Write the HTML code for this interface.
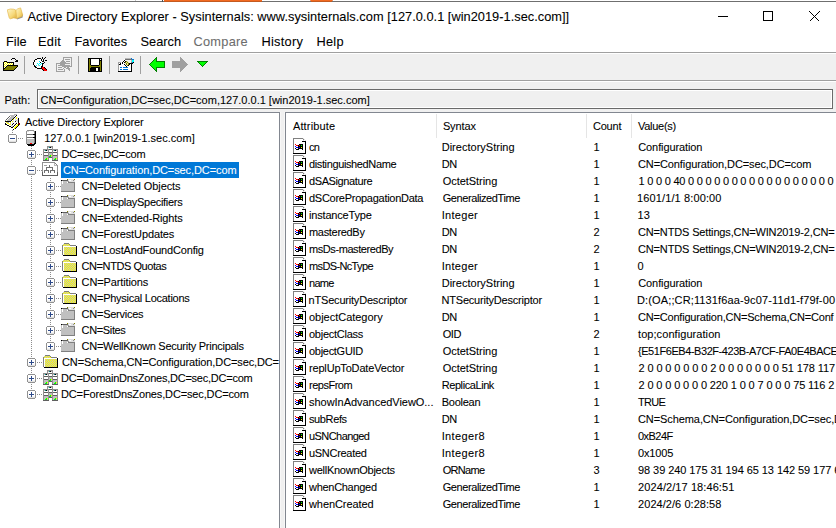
<!DOCTYPE html><html><head><meta charset="utf-8"><title>Active Directory Explorer</title><style>
*{margin:0;padding:0}
html,body{width:836px;height:528px;overflow:hidden;background:#fff}
body{position:relative;font-family:"Liberation Sans",sans-serif;color:#000}
.a{position:absolute;display:block;shape-rendering:crispEdges}
.t{position:absolute;white-space:pre;height:0;width:0;line-height:1}
.t i{font-style:normal;position:absolute;left:0;bottom:0;white-space:pre;-webkit-text-stroke:0.08px currentColor}
</style></head><body>
<div class="a" style="left:0px;top:1px;width:836px;height:1px;background:#6f6f6f;"></div>
<div class="a" style="left:164px;top:0px;width:98px;height:1px;background:#f26a21;"></div>
<div class="a" style="left:164px;top:1px;width:98px;height:1px;background:#c45a20;"></div>
<div class="a" style="left:135px;top:0px;width:1px;height:1px;background:#c8c8c8;"></div>
<div class="a" style="left:162px;top:0px;width:1px;height:2px;background:#505050;"></div>
<div class="a" style="left:310px;top:0px;width:23px;height:1px;background:#f26a21;border-radius:1px 1px 0 0"></div>
<div class="a" style="left:311px;top:1px;width:21px;height:1px;background:#c45a20;"></div>
<svg class="a" style="left:7px;top:7px;shape-rendering:geometricPrecision" width="17" height="14" viewBox="0 0 17 14">
<defs><linearGradient id="bk" x1="0" y1="0" x2="1" y2="1"><stop offset="0" stop-color="#fff6c8"/><stop offset="0.6" stop-color="#f6d878"/><stop offset="1" stop-color="#d9a93a"/></linearGradient></defs>
<path d="M15.8 7.2 L15.6 10.4 L10 12.6 L9.6 11.6 Z" fill="#6e6e6e" opacity="0.75"/>
<path d="M0.2 2.9 Q3.5 1.4 6.6 2.2 Q8.4 2.6 9.2 3.6 L9.7 11.4 Q6.4 10.2 3.6 11.8 Q2.6 11.9 2.2 10.8 Z" fill="url(#bk)" stroke="#e0b040" stroke-width="0.6"/>
<path d="M8.9 3.4 Q10.2 1.4 13.6 0.9 L15.6 7.6 Q15.7 9.2 14.6 9.8 Q11.8 10.3 9.7 11.4 Z" fill="url(#bk)" stroke="#e0b040" stroke-width="0.6"/>
</svg>
<span class="t" style="left:27.5px;top:24px;font-size:12.8px;color:#000;letter-spacing:0.020px"><i>Active Directory Explorer - Sysinternals: www.sysinternals.com [127.0.0.1 [win2019-1.sec.com]]</i></span>
<div class="a" style="left:718px;top:16px;width:10px;height:1px;background:#000;"></div>
<div class="a" style="left:763px;top:11px;width:8px;height:8px;border:1px solid #000"></div>
<svg class="a" style="left:809px;top:11px" width="11" height="11" viewBox="0 0 11 11"><path d="M0.5 0.5L10.5 10.5M10.5 0.5L0.5 10.5" stroke="#000" stroke-width="1.1"/></svg>
<span class="t" style="left:6px;top:49px;font-size:12.8px;color:#000;letter-spacing:0.000px"><i>File</i></span>
<span class="t" style="left:38px;top:49px;font-size:12.8px;color:#000;letter-spacing:0.250px"><i>Edit</i></span>
<span class="t" style="left:74.5px;top:49px;font-size:12.8px;color:#000;letter-spacing:0.000px"><i>Favorites</i></span>
<span class="t" style="left:140.5px;top:49px;font-size:12.8px;color:#000;letter-spacing:0.000px"><i>Search</i></span>
<span class="t" style="left:193.5px;top:49px;font-size:12.8px;color:#6d6d6d;letter-spacing:0.250px"><i>Compare</i></span>
<span class="t" style="left:261.5px;top:49px;font-size:12.8px;color:#000;letter-spacing:0.250px"><i>History</i></span>
<span class="t" style="left:316.5px;top:49px;font-size:12.8px;color:#000;letter-spacing:0.250px"><i>Help</i></span>
<div class="a" style="left:0px;top:52px;width:836px;height:1px;background:#a0a0a0;"></div>
<div class="a" style="left:0px;top:53px;width:836px;height:1px;background:#fff;"></div>
<div class="a" style="left:0px;top:54px;width:836px;height:26px;background:#f0f0f0;"></div>
<div class="a" style="left:0px;top:80px;width:836px;height:1px;background:#a0a0a0;"></div>
<div class="a" style="left:0px;top:81px;width:836px;height:1px;background:#fff;"></div>
<div class="a" style="left:0px;top:82px;width:836px;height:30px;background:#f0f0f0;"></div>
<div class="a" style="left:24px;top:56px;width:1px;height:18px;background:#a0a0a0;"></div>
<div class="a" style="left:78px;top:56px;width:1px;height:18px;background:#a0a0a0;"></div>
<div class="a" style="left:109px;top:56px;width:1px;height:18px;background:#a0a0a0;"></div>
<div class="a" style="left:140px;top:56px;width:1px;height:18px;background:#a0a0a0;"></div>
<svg class="a" style="left:2px;top:55px" width="16" height="16" shape-rendering="crispEdges"><rect x="10" y="3" width="3" height="1" fill="#000000"/><rect x="9" y="4" width="1" height="1" fill="#000000"/><rect x="13" y="4" width="1" height="1" fill="#000000"/><rect x="14" y="5" width="2" height="1" fill="#000000"/><rect x="2" y="6" width="3" height="1" fill="#000000"/><rect x="13" y="6" width="3" height="1" fill="#000000"/><rect x="1" y="7" width="1" height="1" fill="#000000"/><rect x="2" y="7" width="1" height="1" fill="#ffff00"/><rect x="3" y="7" width="1" height="1" fill="#ffffff"/><rect x="4" y="7" width="1" height="1" fill="#ffff00"/><rect x="5" y="7" width="7" height="1" fill="#000000"/><rect x="1" y="8" width="1" height="1" fill="#000000"/><rect x="2" y="8" width="1" height="1" fill="#ffffff"/><rect x="3" y="8" width="1" height="1" fill="#ffff00"/><rect x="4" y="8" width="1" height="1" fill="#ffffff"/><rect x="5" y="8" width="1" height="1" fill="#ffff00"/><rect x="6" y="8" width="1" height="1" fill="#ffffff"/><rect x="7" y="8" width="1" height="1" fill="#ffff00"/><rect x="8" y="8" width="1" height="1" fill="#ffffff"/><rect x="9" y="8" width="1" height="1" fill="#ffff00"/><rect x="10" y="8" width="1" height="1" fill="#ffffff"/><rect x="11" y="8" width="1" height="1" fill="#000000"/><rect x="1" y="9" width="1" height="1" fill="#000000"/><rect x="2" y="9" width="1" height="1" fill="#ffff00"/><rect x="3" y="9" width="1" height="1" fill="#ffffff"/><rect x="4" y="9" width="1" height="1" fill="#ffff00"/><rect x="5" y="9" width="1" height="1" fill="#ffffff"/><rect x="6" y="9" width="1" height="1" fill="#ffff00"/><rect x="7" y="9" width="1" height="1" fill="#ffffff"/><rect x="8" y="9" width="1" height="1" fill="#ffff00"/><rect x="9" y="9" width="1" height="1" fill="#ffffff"/><rect x="10" y="9" width="1" height="1" fill="#ffff00"/><rect x="11" y="9" width="1" height="1" fill="#000000"/><rect x="1" y="10" width="1" height="1" fill="#000000"/><rect x="2" y="10" width="1" height="1" fill="#ffffff"/><rect x="3" y="10" width="1" height="1" fill="#ffff00"/><rect x="4" y="10" width="1" height="1" fill="#ffffff"/><rect x="5" y="10" width="11" height="1" fill="#000000"/><rect x="1" y="11" width="1" height="1" fill="#000000"/><rect x="2" y="11" width="1" height="1" fill="#ffff00"/><rect x="3" y="11" width="1" height="1" fill="#ffffff"/><rect x="4" y="11" width="1" height="1" fill="#000000"/><rect x="5" y="11" width="10" height="1" fill="#808000"/><rect x="15" y="11" width="1" height="1" fill="#000000"/><rect x="1" y="12" width="1" height="1" fill="#000000"/><rect x="2" y="12" width="1" height="1" fill="#ffffff"/><rect x="3" y="12" width="1" height="1" fill="#000000"/><rect x="4" y="12" width="10" height="1" fill="#808000"/><rect x="14" y="12" width="1" height="1" fill="#000000"/><rect x="1" y="13" width="2" height="1" fill="#000000"/><rect x="3" y="13" width="10" height="1" fill="#808000"/><rect x="13" y="13" width="1" height="1" fill="#000000"/><rect x="1" y="14" width="1" height="1" fill="#000000"/><rect x="2" y="14" width="10" height="1" fill="#808000"/><rect x="12" y="14" width="1" height="1" fill="#000000"/><rect x="1" y="15" width="11" height="1" fill="#000000"/></svg>
<svg class="a" style="left:31px;top:55px" width="16" height="16" shape-rendering="crispEdges"><rect x="11" y="2" width="1" height="1" fill="#000000"/><rect x="14" y="2" width="1" height="1" fill="#000000"/><rect x="6" y="3" width="4" height="1" fill="#000000"/><rect x="11" y="3" width="1" height="1" fill="#000000"/><rect x="13" y="3" width="1" height="1" fill="#000000"/><rect x="4" y="4" width="2" height="1" fill="#000000"/><rect x="6" y="4" width="4" height="1" fill="#ffffff"/><rect x="10" y="4" width="1" height="1" fill="#000000"/><rect x="11" y="4" width="1" height="1" fill="#ffffff"/><rect x="12" y="4" width="1" height="1" fill="#000000"/><rect x="3" y="5" width="1" height="1" fill="#000000"/><rect x="4" y="5" width="6" height="1" fill="#ffffff"/><rect x="10" y="5" width="1" height="1" fill="#000000"/><rect x="11" y="5" width="1" height="1" fill="#ffffff"/><rect x="12" y="5" width="1" height="1" fill="#000000"/><rect x="14" y="5" width="2" height="1" fill="#000000"/><rect x="3" y="6" width="1" height="1" fill="#000000"/><rect x="4" y="6" width="4" height="1" fill="#ffffff"/><rect x="8" y="6" width="1" height="1" fill="#00ffff"/><rect x="9" y="6" width="2" height="1" fill="#ffffff"/><rect x="11" y="6" width="2" height="1" fill="#000000"/><rect x="2" y="7" width="1" height="1" fill="#000000"/><rect x="3" y="7" width="6" height="1" fill="#ffffff"/><rect x="9" y="7" width="1" height="1" fill="#000000"/><rect x="10" y="7" width="3" height="1" fill="#ffffff"/><rect x="13" y="7" width="1" height="1" fill="#000000"/><rect x="2" y="8" width="1" height="1" fill="#000000"/><rect x="3" y="8" width="3" height="1" fill="#ffffff"/><rect x="6" y="8" width="1" height="1" fill="#00ffff"/><rect x="7" y="8" width="1" height="1" fill="#ffffff"/><rect x="8" y="8" width="1" height="1" fill="#00ffff"/><rect x="9" y="8" width="1" height="1" fill="#ffffff"/><rect x="10" y="8" width="1" height="1" fill="#00ffff"/><rect x="11" y="8" width="2" height="1" fill="#000000"/><rect x="2" y="9" width="1" height="1" fill="#000000"/><rect x="3" y="9" width="4" height="1" fill="#ffffff"/><rect x="7" y="9" width="1" height="1" fill="#00ffff"/><rect x="8" y="9" width="1" height="1" fill="#ffffff"/><rect x="9" y="9" width="1" height="1" fill="#00ffff"/><rect x="10" y="9" width="1" height="1" fill="#ffffff"/><rect x="11" y="9" width="1" height="1" fill="#000000"/><rect x="3" y="10" width="1" height="1" fill="#000000"/><rect x="4" y="10" width="1" height="1" fill="#ffffff"/><rect x="5" y="10" width="1" height="1" fill="#00ffff"/><rect x="6" y="10" width="1" height="1" fill="#ffffff"/><rect x="7" y="10" width="1" height="1" fill="#f0b0b0"/><rect x="8" y="10" width="1" height="1" fill="#00ffff"/><rect x="9" y="10" width="2" height="1" fill="#ffffff"/><rect x="11" y="10" width="1" height="1" fill="#000000"/><rect x="3" y="11" width="2" height="1" fill="#000000"/><rect x="5" y="11" width="5" height="1" fill="#ffffff"/><rect x="10" y="11" width="2" height="1" fill="#000000"/><rect x="4" y="12" width="2" height="1" fill="#000000"/><rect x="6" y="12" width="4" height="1" fill="#ffffff"/><rect x="10" y="12" width="1" height="1" fill="#000000"/><rect x="11" y="12" width="2" height="1" fill="#ff0000"/><rect x="13" y="12" width="1" height="1" fill="#000000"/><rect x="6" y="13" width="5" height="1" fill="#000000"/><rect x="11" y="13" width="3" height="1" fill="#ff0000"/><rect x="14" y="13" width="1" height="1" fill="#000000"/><rect x="11" y="14" width="1" height="1" fill="#000000"/><rect x="12" y="14" width="3" height="1" fill="#ff0000"/><rect x="15" y="14" width="1" height="1" fill="#000000"/><rect x="12" y="15" width="1" height="1" fill="#000000"/><rect x="13" y="15" width="3" height="1" fill="#ff0000"/></svg>
<svg class="a" style="left:55px;top:56px" width="18" height="16" shape-rendering="crispEdges"><rect x="8" y="1" width="9" height="1" fill="#a0a0a0"/><rect x="8" y="2" width="1" height="1" fill="#a0a0a0"/><rect x="16" y="2" width="1" height="1" fill="#a0a0a0"/><rect x="8" y="3" width="1" height="1" fill="#a0a0a0"/><rect x="10" y="3" width="5" height="1" fill="#a0a0a0"/><rect x="16" y="3" width="1" height="1" fill="#a0a0a0"/><rect x="7" y="4" width="2" height="1" fill="#a0a0a0"/><rect x="16" y="4" width="1" height="1" fill="#a0a0a0"/><rect x="6" y="5" width="4" height="1" fill="#a0a0a0"/><rect x="11" y="5" width="4" height="1" fill="#a0a0a0"/><rect x="16" y="5" width="1" height="1" fill="#a0a0a0"/><rect x="5" y="6" width="6" height="1" fill="#a0a0a0"/><rect x="16" y="6" width="1" height="1" fill="#a0a0a0"/><rect x="1" y="7" width="14" height="1" fill="#a0a0a0"/><rect x="16" y="7" width="1" height="1" fill="#a0a0a0"/><rect x="1" y="8" width="1" height="1" fill="#a0a0a0"/><rect x="5" y="8" width="5" height="1" fill="#a0a0a0"/><rect x="16" y="8" width="1" height="1" fill="#a0a0a0"/><rect x="1" y="9" width="1" height="1" fill="#a0a0a0"/><rect x="3" y="9" width="12" height="1" fill="#a0a0a0"/><rect x="16" y="9" width="1" height="1" fill="#a0a0a0"/><rect x="1" y="10" width="1" height="1" fill="#a0a0a0"/><rect x="7" y="10" width="10" height="1" fill="#a0a0a0"/><rect x="1" y="11" width="1" height="1" fill="#a0a0a0"/><rect x="3" y="11" width="4" height="1" fill="#a0a0a0"/><rect x="9" y="11" width="2" height="1" fill="#a0a0a0"/><rect x="12" y="11" width="2" height="1" fill="#a0a0a0"/><rect x="1" y="12" width="1" height="1" fill="#a0a0a0"/><rect x="8" y="12" width="1" height="1" fill="#a0a0a0"/><rect x="11" y="12" width="4" height="1" fill="#a0a0a0"/><rect x="1" y="13" width="1" height="1" fill="#a0a0a0"/><rect x="3" y="13" width="5" height="1" fill="#a0a0a0"/><rect x="9" y="13" width="1" height="1" fill="#a0a0a0"/><rect x="13" y="13" width="2" height="1" fill="#a0a0a0"/><rect x="1" y="14" width="1" height="1" fill="#a0a0a0"/><rect x="9" y="14" width="1" height="1" fill="#a0a0a0"/><rect x="14" y="14" width="1" height="1" fill="#a0a0a0"/><rect x="1" y="15" width="9" height="1" fill="#a0a0a0"/></svg>
<svg class="a" style="left:88px;top:58px" width="14" height="14" shape-rendering="crispEdges"><rect x="0" y="0" width="14" height="1" fill="#000000"/><rect x="0" y="1" width="1" height="1" fill="#000000"/><rect x="1" y="1" width="1" height="1" fill="#808000"/><rect x="2" y="1" width="1" height="1" fill="#000000"/><rect x="3" y="1" width="8" height="1" fill="#ffffff"/><rect x="11" y="1" width="1" height="1" fill="#000000"/><rect x="12" y="1" width="1" height="1" fill="#ffffff"/><rect x="13" y="1" width="1" height="1" fill="#000000"/><rect x="0" y="2" width="1" height="1" fill="#000000"/><rect x="1" y="2" width="1" height="1" fill="#808000"/><rect x="2" y="2" width="1" height="1" fill="#000000"/><rect x="3" y="2" width="8" height="1" fill="#ffffff"/><rect x="11" y="2" width="3" height="1" fill="#000000"/><rect x="0" y="3" width="1" height="1" fill="#000000"/><rect x="1" y="3" width="1" height="1" fill="#808000"/><rect x="2" y="3" width="1" height="1" fill="#000000"/><rect x="3" y="3" width="8" height="1" fill="#ffffff"/><rect x="11" y="3" width="1" height="1" fill="#000000"/><rect x="12" y="3" width="1" height="1" fill="#808000"/><rect x="13" y="3" width="1" height="1" fill="#000000"/><rect x="0" y="4" width="1" height="1" fill="#000000"/><rect x="1" y="4" width="1" height="1" fill="#808000"/><rect x="2" y="4" width="1" height="1" fill="#000000"/><rect x="3" y="4" width="8" height="1" fill="#ffffff"/><rect x="11" y="4" width="1" height="1" fill="#000000"/><rect x="12" y="4" width="1" height="1" fill="#808000"/><rect x="13" y="4" width="1" height="1" fill="#000000"/><rect x="0" y="5" width="1" height="1" fill="#000000"/><rect x="1" y="5" width="1" height="1" fill="#808000"/><rect x="2" y="5" width="1" height="1" fill="#000000"/><rect x="3" y="5" width="8" height="1" fill="#ffffff"/><rect x="11" y="5" width="1" height="1" fill="#000000"/><rect x="12" y="5" width="1" height="1" fill="#808000"/><rect x="13" y="5" width="1" height="1" fill="#000000"/><rect x="0" y="6" width="1" height="1" fill="#000000"/><rect x="1" y="6" width="1" height="1" fill="#808000"/><rect x="2" y="6" width="1" height="1" fill="#000000"/><rect x="3" y="6" width="8" height="1" fill="#ffffff"/><rect x="11" y="6" width="1" height="1" fill="#000000"/><rect x="12" y="6" width="1" height="1" fill="#808000"/><rect x="13" y="6" width="1" height="1" fill="#000000"/><rect x="0" y="7" width="1" height="1" fill="#000000"/><rect x="1" y="7" width="2" height="1" fill="#808000"/><rect x="3" y="7" width="8" height="1" fill="#000000"/><rect x="11" y="7" width="2" height="1" fill="#808000"/><rect x="13" y="7" width="1" height="1" fill="#000000"/><rect x="0" y="8" width="1" height="1" fill="#000000"/><rect x="1" y="8" width="12" height="1" fill="#808000"/><rect x="13" y="8" width="1" height="1" fill="#000000"/><rect x="0" y="9" width="1" height="1" fill="#000000"/><rect x="1" y="9" width="2" height="1" fill="#808000"/><rect x="3" y="9" width="9" height="1" fill="#000000"/><rect x="12" y="9" width="1" height="1" fill="#808000"/><rect x="13" y="9" width="1" height="1" fill="#000000"/><rect x="0" y="10" width="1" height="1" fill="#000000"/><rect x="1" y="10" width="1" height="1" fill="#808000"/><rect x="2" y="10" width="6" height="1" fill="#000000"/><rect x="8" y="10" width="2" height="1" fill="#ffffff"/><rect x="10" y="10" width="2" height="1" fill="#000000"/><rect x="12" y="10" width="1" height="1" fill="#808000"/><rect x="13" y="10" width="1" height="1" fill="#000000"/><rect x="0" y="11" width="1" height="1" fill="#000000"/><rect x="1" y="11" width="1" height="1" fill="#808000"/><rect x="2" y="11" width="6" height="1" fill="#000000"/><rect x="8" y="11" width="2" height="1" fill="#ffffff"/><rect x="10" y="11" width="2" height="1" fill="#000000"/><rect x="12" y="11" width="1" height="1" fill="#808000"/><rect x="13" y="11" width="1" height="1" fill="#000000"/><rect x="0" y="12" width="1" height="1" fill="#000000"/><rect x="1" y="12" width="1" height="1" fill="#808000"/><rect x="2" y="12" width="6" height="1" fill="#000000"/><rect x="8" y="12" width="2" height="1" fill="#ffffff"/><rect x="10" y="12" width="2" height="1" fill="#000000"/><rect x="12" y="12" width="1" height="1" fill="#808000"/><rect x="13" y="12" width="1" height="1" fill="#000000"/><rect x="0" y="13" width="14" height="1" fill="#000000"/></svg>
<svg class="a" style="left:117px;top:56px" width="18" height="16" shape-rendering="crispEdges"><rect x="8" y="2" width="6" height="1" fill="#b8b8b8"/><rect x="14" y="2" width="1" height="1" fill="#0078d7"/><rect x="7" y="3" width="1" height="1" fill="#ffffff"/><rect x="8" y="3" width="7" height="1" fill="#707070"/><rect x="15" y="3" width="2" height="1" fill="#0078d7"/><rect x="6" y="4" width="1" height="1" fill="#ffffff"/><rect x="7" y="4" width="1" height="1" fill="#000000"/><rect x="8" y="4" width="1" height="1" fill="#ffffff"/><rect x="12" y="4" width="2" height="1" fill="#f4f4f4"/><rect x="14" y="4" width="1" height="1" fill="#b8b8b8"/><rect x="15" y="4" width="2" height="1" fill="#00ffff"/><rect x="5" y="5" width="1" height="1" fill="#ffffff"/><rect x="6" y="5" width="1" height="1" fill="#000000"/><rect x="7" y="5" width="1" height="1" fill="#ffffff"/><rect x="8" y="5" width="1" height="1" fill="#000000"/><rect x="9" y="5" width="1" height="1" fill="#808000"/><rect x="10" y="5" width="1" height="1" fill="#e8e8a0"/><rect x="12" y="5" width="2" height="1" fill="#f4f4f4"/><rect x="14" y="5" width="1" height="1" fill="#b8b8b8"/><rect x="15" y="5" width="2" height="1" fill="#00ffff"/><rect x="1" y="6" width="3" height="1" fill="#a0a0a0"/><rect x="4" y="6" width="1" height="1" fill="#ffffff"/><rect x="5" y="6" width="1" height="1" fill="#000000"/><rect x="6" y="6" width="1" height="1" fill="#ffffff"/><rect x="7" y="6" width="1" height="1" fill="#000000"/><rect x="8" y="6" width="1" height="1" fill="#808000"/><rect x="9" y="6" width="1" height="1" fill="#e8e8a0"/><rect x="10" y="6" width="1" height="1" fill="#808000"/><rect x="11" y="6" width="1" height="1" fill="#e8e8a0"/><rect x="12" y="6" width="2" height="1" fill="#f4f4f4"/><rect x="14" y="6" width="1" height="1" fill="#808080"/><rect x="15" y="6" width="1" height="1" fill="#0078d7"/><rect x="16" y="6" width="1" height="1" fill="#000000"/><rect x="1" y="7" width="1" height="1" fill="#a0a0a0"/><rect x="2" y="7" width="1" height="1" fill="#ffffff"/><rect x="3" y="7" width="1" height="1" fill="#000000"/><rect x="4" y="7" width="1" height="1" fill="#ffffff"/><rect x="5" y="7" width="1" height="1" fill="#000000"/><rect x="6" y="7" width="1" height="1" fill="#ffffff"/><rect x="8" y="7" width="1" height="1" fill="#e8e8a0"/><rect x="9" y="7" width="1" height="1" fill="#808000"/><rect x="10" y="7" width="1" height="1" fill="#e8e8a0"/><rect x="11" y="7" width="1" height="1" fill="#808000"/><rect x="12" y="7" width="4" height="1" fill="#000000"/><rect x="1" y="8" width="1" height="1" fill="#a0a0a0"/><rect x="2" y="8" width="2" height="1" fill="#000000"/><rect x="4" y="8" width="3" height="1" fill="#ffffff"/><rect x="7" y="8" width="1" height="1" fill="#000000"/><rect x="9" y="8" width="1" height="1" fill="#808000"/><rect x="10" y="8" width="1" height="1" fill="#e8e8a0"/><rect x="11" y="8" width="1" height="1" fill="#808000"/><rect x="12" y="8" width="1" height="1" fill="#000000"/><rect x="13" y="8" width="1" height="1" fill="#ffffff"/><rect x="14" y="8" width="1" height="1" fill="#000000"/><rect x="1" y="9" width="1" height="1" fill="#a0a0a0"/><rect x="2" y="9" width="6" height="1" fill="#ffffff"/><rect x="8" y="9" width="1" height="1" fill="#000000"/><rect x="10" y="9" width="1" height="1" fill="#808000"/><rect x="11" y="9" width="1" height="1" fill="#000000"/><rect x="12" y="9" width="2" height="1" fill="#ffffff"/><rect x="14" y="9" width="1" height="1" fill="#000000"/><rect x="1" y="10" width="1" height="1" fill="#a0a0a0"/><rect x="2" y="10" width="7" height="1" fill="#ffffff"/><rect x="9" y="10" width="1" height="1" fill="#000000"/><rect x="10" y="10" width="4" height="1" fill="#ffffff"/><rect x="14" y="10" width="1" height="1" fill="#000000"/><rect x="1" y="11" width="1" height="1" fill="#a0a0a0"/><rect x="2" y="11" width="1" height="1" fill="#ffffff"/><rect x="3" y="11" width="2" height="1" fill="#0078d7"/><rect x="5" y="11" width="1" height="1" fill="#ffffff"/><rect x="6" y="11" width="5" height="1" fill="#0078d7"/><rect x="11" y="11" width="3" height="1" fill="#ffffff"/><rect x="14" y="11" width="1" height="1" fill="#000000"/><rect x="1" y="12" width="1" height="1" fill="#a0a0a0"/><rect x="2" y="12" width="12" height="1" fill="#ffffff"/><rect x="14" y="12" width="1" height="1" fill="#000000"/><rect x="1" y="13" width="1" height="1" fill="#a0a0a0"/><rect x="2" y="13" width="1" height="1" fill="#ffffff"/><rect x="3" y="13" width="2" height="1" fill="#0078d7"/><rect x="5" y="13" width="1" height="1" fill="#ffffff"/><rect x="6" y="13" width="5" height="1" fill="#0078d7"/><rect x="11" y="13" width="3" height="1" fill="#ffffff"/><rect x="14" y="13" width="1" height="1" fill="#000000"/><rect x="1" y="14" width="1" height="1" fill="#a0a0a0"/><rect x="2" y="14" width="12" height="1" fill="#ffffff"/><rect x="14" y="14" width="1" height="1" fill="#000000"/><rect x="1" y="15" width="14" height="1" fill="#000000"/></svg>
<svg class="a" style="left:148px;top:57px" width="18" height="15" shape-rendering="crispEdges"><rect x="8" y="0" width="1" height="1" fill="#008000"/><rect x="7" y="1" width="2" height="1" fill="#008000"/><rect x="6" y="2" width="1" height="1" fill="#008000"/><rect x="7" y="2" width="1" height="1" fill="#00ff00"/><rect x="8" y="2" width="1" height="1" fill="#008000"/><rect x="5" y="3" width="1" height="1" fill="#008000"/><rect x="6" y="3" width="2" height="1" fill="#00ff00"/><rect x="8" y="3" width="1" height="1" fill="#008000"/><rect x="4" y="4" width="1" height="1" fill="#008000"/><rect x="5" y="4" width="3" height="1" fill="#00ff00"/><rect x="8" y="4" width="9" height="1" fill="#008000"/><rect x="3" y="5" width="1" height="1" fill="#008000"/><rect x="4" y="5" width="12" height="1" fill="#00ff00"/><rect x="16" y="5" width="1" height="1" fill="#008000"/><rect x="2" y="6" width="1" height="1" fill="#008000"/><rect x="3" y="6" width="13" height="1" fill="#00ff00"/><rect x="16" y="6" width="1" height="1" fill="#008000"/><rect x="1" y="7" width="1" height="1" fill="#008000"/><rect x="2" y="7" width="14" height="1" fill="#00ff00"/><rect x="16" y="7" width="1" height="1" fill="#008000"/><rect x="2" y="8" width="1" height="1" fill="#008000"/><rect x="3" y="8" width="13" height="1" fill="#00ff00"/><rect x="16" y="8" width="1" height="1" fill="#008000"/><rect x="3" y="9" width="1" height="1" fill="#008000"/><rect x="4" y="9" width="12" height="1" fill="#00ff00"/><rect x="16" y="9" width="1" height="1" fill="#008000"/><rect x="4" y="10" width="1" height="1" fill="#008000"/><rect x="5" y="10" width="3" height="1" fill="#00ff00"/><rect x="8" y="10" width="9" height="1" fill="#008000"/><rect x="5" y="11" width="1" height="1" fill="#008000"/><rect x="6" y="11" width="2" height="1" fill="#00ff00"/><rect x="8" y="11" width="1" height="1" fill="#008000"/><rect x="6" y="12" width="1" height="1" fill="#008000"/><rect x="7" y="12" width="1" height="1" fill="#00ff00"/><rect x="8" y="12" width="1" height="1" fill="#008000"/><rect x="7" y="13" width="2" height="1" fill="#008000"/><rect x="8" y="14" width="1" height="1" fill="#008000"/></svg>
<svg class="a" style="left:171px;top:57px" width="18" height="15" shape-rendering="crispEdges"><rect x="9" y="0" width="1" height="1" fill="#a0a0a0"/><rect x="9" y="1" width="2" height="1" fill="#a0a0a0"/><rect x="9" y="2" width="3" height="1" fill="#a0a0a0"/><rect x="9" y="3" width="4" height="1" fill="#a0a0a0"/><rect x="1" y="4" width="13" height="1" fill="#a0a0a0"/><rect x="1" y="5" width="14" height="1" fill="#a0a0a0"/><rect x="1" y="6" width="15" height="1" fill="#a0a0a0"/><rect x="1" y="7" width="16" height="1" fill="#a0a0a0"/><rect x="1" y="8" width="15" height="1" fill="#a0a0a0"/><rect x="1" y="9" width="14" height="1" fill="#a0a0a0"/><rect x="1" y="10" width="13" height="1" fill="#a0a0a0"/><rect x="9" y="11" width="4" height="1" fill="#a0a0a0"/><rect x="9" y="12" width="3" height="1" fill="#a0a0a0"/><rect x="9" y="13" width="2" height="1" fill="#a0a0a0"/><rect x="9" y="14" width="1" height="1" fill="#a0a0a0"/></svg>
<svg class="a" style="left:197px;top:61px" width="11" height="6" shape-rendering="crispEdges"><rect x="0" y="0" width="11" height="1" fill="#008000"/><rect x="1" y="1" width="1" height="1" fill="#008000"/><rect x="2" y="1" width="7" height="1" fill="#00ff00"/><rect x="9" y="1" width="1" height="1" fill="#008000"/><rect x="2" y="2" width="1" height="1" fill="#008000"/><rect x="3" y="2" width="5" height="1" fill="#00ff00"/><rect x="8" y="2" width="1" height="1" fill="#008000"/><rect x="3" y="3" width="1" height="1" fill="#008000"/><rect x="4" y="3" width="3" height="1" fill="#00ff00"/><rect x="7" y="3" width="1" height="1" fill="#008000"/><rect x="4" y="4" width="1" height="1" fill="#008000"/><rect x="5" y="4" width="1" height="1" fill="#00ff00"/><rect x="6" y="4" width="1" height="1" fill="#008000"/><rect x="5" y="5" width="1" height="1" fill="#008000"/></svg>
<span class="t" style="left:4.5px;top:106px;font-size:11px;color:#000;letter-spacing:0.000px"><i>Path:</i></span>
<div class="a" style="left:37px;top:89px;width:794px;height:18px;border:1px solid #6a6a6a;background:#f0f0f0"></div>
<div class="a" style="left:38px;top:90px;width:794px;height:18px;border:1px solid #fff;box-sizing:border-box"></div>
<span class="t" style="left:40.5px;top:106px;font-size:11px;color:#000;letter-spacing:0.000px"><i>CN=Configuration,DC=sec,DC=com,127.0.0.1 [win2019-1.sec.com]</i></span>
<div class="a" style="left:0px;top:112px;width:279px;height:1px;background:#828790;"></div>
<div class="a" style="left:286px;top:112px;width:550px;height:1px;background:#828790;"></div>
<div class="a" style="left:279px;top:112px;width:1px;height:416px;background:#828790;"></div>
<div class="a" style="left:280px;top:112px;width:5px;height:416px;background:#f0f0f0;"></div>
<div class="a" style="left:280px;top:112px;width:1px;height:416px;background:#f7f7f7;"></div>
<div class="a" style="left:284px;top:112px;width:1px;height:416px;background:#f7f7f7;"></div>
<div class="a" style="left:285px;top:112px;width:1px;height:416px;background:#828790;"></div>
<div class="a" style="left:0;top:0;width:836px;height:528px;clip-path:polygon(0 113px,279px 113px,279px 528px,0 528px)">
<div class="a" style="left:12px;top:130px;width:1px;height:8px;background:repeating-linear-gradient(to bottom,#8c8c8c 0 1px,transparent 1px 2px);"></div>
<div class="a" style="left:31px;top:146px;width:1px;height:249px;background:repeating-linear-gradient(to bottom,#8c8c8c 0 1px,transparent 1px 2px);"></div>
<div class="a" style="left:50px;top:178px;width:1px;height:169px;background:repeating-linear-gradient(to bottom,#8c8c8c 0 1px,transparent 1px 2px);"></div>
<div class="a" style="left:18px;top:138px;width:5px;height:1px;background:repeating-linear-gradient(to right,#8c8c8c 0 1px,transparent 1px 2px);"></div>
<div class="a" style="left:37px;top:154px;width:5px;height:1px;background:repeating-linear-gradient(to right,#8c8c8c 0 1px,transparent 1px 2px);"></div>
<div class="a" style="left:37px;top:170px;width:5px;height:1px;background:repeating-linear-gradient(to right,#8c8c8c 0 1px,transparent 1px 2px);"></div>
<div class="a" style="left:37px;top:362px;width:5px;height:1px;background:repeating-linear-gradient(to right,#8c8c8c 0 1px,transparent 1px 2px);"></div>
<div class="a" style="left:37px;top:378px;width:5px;height:1px;background:repeating-linear-gradient(to right,#8c8c8c 0 1px,transparent 1px 2px);"></div>
<div class="a" style="left:37px;top:394px;width:5px;height:1px;background:repeating-linear-gradient(to right,#8c8c8c 0 1px,transparent 1px 2px);"></div>
<div class="a" style="left:56px;top:186px;width:5px;height:1px;background:repeating-linear-gradient(to right,#8c8c8c 0 1px,transparent 1px 2px);"></div>
<div class="a" style="left:56px;top:202px;width:5px;height:1px;background:repeating-linear-gradient(to right,#8c8c8c 0 1px,transparent 1px 2px);"></div>
<div class="a" style="left:56px;top:218px;width:5px;height:1px;background:repeating-linear-gradient(to right,#8c8c8c 0 1px,transparent 1px 2px);"></div>
<div class="a" style="left:56px;top:234px;width:5px;height:1px;background:repeating-linear-gradient(to right,#8c8c8c 0 1px,transparent 1px 2px);"></div>
<div class="a" style="left:56px;top:250px;width:5px;height:1px;background:repeating-linear-gradient(to right,#8c8c8c 0 1px,transparent 1px 2px);"></div>
<div class="a" style="left:56px;top:266px;width:5px;height:1px;background:repeating-linear-gradient(to right,#8c8c8c 0 1px,transparent 1px 2px);"></div>
<div class="a" style="left:56px;top:282px;width:5px;height:1px;background:repeating-linear-gradient(to right,#8c8c8c 0 1px,transparent 1px 2px);"></div>
<div class="a" style="left:56px;top:298px;width:5px;height:1px;background:repeating-linear-gradient(to right,#8c8c8c 0 1px,transparent 1px 2px);"></div>
<div class="a" style="left:56px;top:314px;width:5px;height:1px;background:repeating-linear-gradient(to right,#8c8c8c 0 1px,transparent 1px 2px);"></div>
<div class="a" style="left:56px;top:330px;width:5px;height:1px;background:repeating-linear-gradient(to right,#8c8c8c 0 1px,transparent 1px 2px);"></div>
<div class="a" style="left:56px;top:346px;width:5px;height:1px;background:repeating-linear-gradient(to right,#8c8c8c 0 1px,transparent 1px 2px);"></div>
<svg class="a" style="left:4px;top:113px" width="17" height="17" shape-rendering="crispEdges"><rect x="10" y="1" width="3" height="1" fill="#b8b8b8"/><rect x="6" y="2" width="5" height="1" fill="#b8b8b8"/><rect x="11" y="2" width="1" height="1" fill="#ffffff"/><rect x="12" y="2" width="1" height="1" fill="#000000"/><rect x="5" y="3" width="1" height="1" fill="#606060"/><rect x="6" y="3" width="1" height="1" fill="#ffffff"/><rect x="7" y="3" width="3" height="1" fill="#b8b8b8"/><rect x="10" y="3" width="1" height="1" fill="#ffffff"/><rect x="11" y="3" width="1" height="1" fill="#000000"/><rect x="4" y="4" width="1" height="1" fill="#606060"/><rect x="5" y="4" width="1" height="1" fill="#ffffff"/><rect x="6" y="4" width="4" height="1" fill="#b8b8b8"/><rect x="10" y="4" width="1" height="1" fill="#000000"/><rect x="11" y="4" width="1" height="1" fill="#ffffff"/><rect x="12" y="4" width="1" height="1" fill="#ffff00"/><rect x="13" y="4" width="1" height="1" fill="#e0e0e0"/><rect x="3" y="5" width="1" height="1" fill="#606060"/><rect x="4" y="5" width="1" height="1" fill="#ffffff"/><rect x="5" y="5" width="4" height="1" fill="#b8b8b8"/><rect x="9" y="5" width="1" height="1" fill="#000000"/><rect x="10" y="5" width="1" height="1" fill="#ffffff"/><rect x="11" y="5" width="1" height="1" fill="#e0e0e0"/><rect x="12" y="5" width="1" height="1" fill="#ffff00"/><rect x="13" y="5" width="1" height="1" fill="#ffffff"/><rect x="14" y="5" width="1" height="1" fill="#000000"/><rect x="2" y="6" width="1" height="1" fill="#606060"/><rect x="3" y="6" width="1" height="1" fill="#ffffff"/><rect x="4" y="6" width="4" height="1" fill="#b8b8b8"/><rect x="8" y="6" width="1" height="1" fill="#000000"/><rect x="9" y="6" width="1" height="1" fill="#ffff00"/><rect x="10" y="6" width="1" height="1" fill="#ffffff"/><rect x="11" y="6" width="1" height="1" fill="#e0e0e0"/><rect x="12" y="6" width="1" height="1" fill="#ffffff"/><rect x="13" y="6" width="1" height="1" fill="#e0e0e0"/><rect x="14" y="6" width="1" height="1" fill="#000000"/><rect x="1" y="7" width="1" height="1" fill="#a0a0a0"/><rect x="2" y="7" width="1" height="1" fill="#ffffff"/><rect x="3" y="7" width="4" height="1" fill="#b8b8b8"/><rect x="7" y="7" width="1" height="1" fill="#000000"/><rect x="8" y="7" width="1" height="1" fill="#ffffff"/><rect x="9" y="7" width="1" height="1" fill="#e0e0e0"/><rect x="10" y="7" width="1" height="1" fill="#ffffff"/><rect x="11" y="7" width="1" height="1" fill="#e0e0e0"/><rect x="12" y="7" width="1" height="1" fill="#c0c0c0"/><rect x="13" y="7" width="1" height="1" fill="#e0e0e0"/><rect x="14" y="7" width="1" height="1" fill="#000000"/><rect x="1" y="8" width="6" height="1" fill="#000000"/><rect x="7" y="8" width="1" height="1" fill="#ffffff"/><rect x="8" y="8" width="1" height="1" fill="#ffff00"/><rect x="9" y="8" width="1" height="1" fill="#e0e0e0"/><rect x="10" y="8" width="1" height="1" fill="#ffffff"/><rect x="11" y="8" width="1" height="1" fill="#000000"/><rect x="12" y="8" width="1" height="1" fill="#ffffff"/><rect x="13" y="8" width="1" height="1" fill="#e0e0e0"/><rect x="14" y="8" width="1" height="1" fill="#000000"/><rect x="2" y="9" width="1" height="1" fill="#ffff00"/><rect x="3" y="9" width="2" height="1" fill="#a0a0a0"/><rect x="5" y="9" width="1" height="1" fill="#ffffff"/><rect x="6" y="9" width="1" height="1" fill="#ffff00"/><rect x="7" y="9" width="1" height="1" fill="#ffffff"/><rect x="8" y="9" width="1" height="1" fill="#e0e0e0"/><rect x="9" y="9" width="1" height="1" fill="#ffffff"/><rect x="10" y="9" width="1" height="1" fill="#e0e0e0"/><rect x="11" y="9" width="1" height="1" fill="#ffffff"/><rect x="12" y="9" width="1" height="1" fill="#e0e0e0"/><rect x="13" y="9" width="1" height="1" fill="#ffffff"/><rect x="14" y="9" width="1" height="1" fill="#000000"/><rect x="1" y="10" width="1" height="1" fill="#000000"/><rect x="2" y="10" width="1" height="1" fill="#ffffff"/><rect x="3" y="10" width="2" height="1" fill="#ffff00"/><rect x="5" y="10" width="1" height="1" fill="#ffffff"/><rect x="6" y="10" width="1" height="1" fill="#b8b8b8"/><rect x="7" y="10" width="1" height="1" fill="#ffffff"/><rect x="8" y="10" width="1" height="1" fill="#e0e0e0"/><rect x="9" y="10" width="1" height="1" fill="#000000"/><rect x="10" y="10" width="1" height="1" fill="#ffffff"/><rect x="11" y="10" width="1" height="1" fill="#e0e0e0"/><rect x="12" y="10" width="1" height="1" fill="#000000"/><rect x="13" y="10" width="1" height="1" fill="#ffffff"/><rect x="14" y="10" width="2" height="1" fill="#900000"/><rect x="1" y="11" width="2" height="1" fill="#000000"/><rect x="3" y="11" width="2" height="1" fill="#ffffff"/><rect x="5" y="11" width="2" height="1" fill="#ffff00"/><rect x="7" y="11" width="1" height="1" fill="#ffffff"/><rect x="8" y="11" width="1" height="1" fill="#000000"/><rect x="9" y="11" width="1" height="1" fill="#ffffff"/><rect x="10" y="11" width="1" height="1" fill="#e0e0e0"/><rect x="11" y="11" width="1" height="1" fill="#000000"/><rect x="12" y="11" width="1" height="1" fill="#ffffff"/><rect x="13" y="11" width="1" height="1" fill="#ffff00"/><rect x="14" y="11" width="1" height="1" fill="#000000"/><rect x="15" y="11" width="1" height="1" fill="#900000"/><rect x="3" y="12" width="2" height="1" fill="#000000"/><rect x="5" y="12" width="2" height="1" fill="#ffffff"/><rect x="7" y="12" width="1" height="1" fill="#b8b8b8"/><rect x="8" y="12" width="1" height="1" fill="#e0e0e0"/><rect x="9" y="12" width="1" height="1" fill="#ffffff"/><rect x="10" y="12" width="1" height="1" fill="#000000"/><rect x="11" y="12" width="1" height="1" fill="#ffffff"/><rect x="12" y="12" width="2" height="1" fill="#ffff00"/><rect x="14" y="12" width="1" height="1" fill="#000000"/><rect x="5" y="13" width="2" height="1" fill="#000000"/><rect x="7" y="13" width="1" height="1" fill="#ffffff"/><rect x="8" y="13" width="1" height="1" fill="#b8b8b8"/><rect x="9" y="13" width="1" height="1" fill="#000000"/><rect x="10" y="13" width="1" height="1" fill="#ffffff"/><rect x="11" y="13" width="2" height="1" fill="#ffff00"/><rect x="13" y="13" width="1" height="1" fill="#000000"/><rect x="7" y="14" width="2" height="1" fill="#000000"/><rect x="9" y="14" width="1" height="1" fill="#ffffff"/><rect x="10" y="14" width="2" height="1" fill="#ffff00"/><rect x="12" y="14" width="1" height="1" fill="#000000"/><rect x="9" y="15" width="1" height="1" fill="#ffffff"/><rect x="10" y="15" width="1" height="1" fill="#ffff00"/><rect x="11" y="15" width="1" height="1" fill="#000000"/><rect x="9" y="16" width="1" height="1" fill="#000000"/></svg>
<span class="t" style="left:25.0px;top:128px;font-size:11px;color:#000;letter-spacing:-0.096px"><i>Active Directory Explorer</i></span>
<svg class="a" style="left:8px;top:134px" width="9" height="9"><use href="#bm"/></svg>
<svg class="a" style="left:24px;top:129px" width="12" height="17" shape-rendering="crispEdges"><rect x="3" y="1" width="7" height="1" fill="#909090"/><rect x="2" y="2" width="1" height="1" fill="#909090"/><rect x="3" y="2" width="2" height="1" fill="#d8d8d8"/><rect x="5" y="2" width="4" height="1" fill="#ffffff"/><rect x="9" y="2" width="1" height="1" fill="#d8d8d8"/><rect x="10" y="2" width="1" height="1" fill="#808080"/><rect x="11" y="2" width="1" height="1" fill="#000000"/><rect x="2" y="3" width="1" height="1" fill="#909090"/><rect x="3" y="3" width="7" height="1" fill="#ffffff"/><rect x="10" y="3" width="1" height="1" fill="#808080"/><rect x="11" y="3" width="1" height="1" fill="#000000"/><rect x="2" y="4" width="1" height="1" fill="#909090"/><rect x="3" y="4" width="7" height="1" fill="#ffffff"/><rect x="10" y="4" width="1" height="1" fill="#808080"/><rect x="11" y="4" width="1" height="1" fill="#000000"/><rect x="2" y="5" width="1" height="1" fill="#909090"/><rect x="3" y="5" width="6" height="1" fill="#707070"/><rect x="9" y="5" width="3" height="1" fill="#000000"/><rect x="2" y="6" width="1" height="1" fill="#909090"/><rect x="3" y="6" width="7" height="1" fill="#ffffff"/><rect x="10" y="6" width="1" height="1" fill="#808080"/><rect x="11" y="6" width="1" height="1" fill="#000000"/><rect x="2" y="7" width="1" height="1" fill="#909090"/><rect x="3" y="7" width="7" height="1" fill="#ffffff"/><rect x="10" y="7" width="1" height="1" fill="#808080"/><rect x="11" y="7" width="1" height="1" fill="#000000"/><rect x="2" y="8" width="1" height="1" fill="#909090"/><rect x="3" y="8" width="6" height="1" fill="#707070"/><rect x="9" y="8" width="3" height="1" fill="#000000"/><rect x="2" y="9" width="1" height="1" fill="#909090"/><rect x="3" y="9" width="7" height="1" fill="#ffffff"/><rect x="10" y="9" width="1" height="1" fill="#808080"/><rect x="11" y="9" width="1" height="1" fill="#000000"/><rect x="2" y="10" width="1" height="1" fill="#909090"/><rect x="3" y="10" width="7" height="1" fill="#c0c0c0"/><rect x="10" y="10" width="1" height="1" fill="#808080"/><rect x="11" y="10" width="1" height="1" fill="#000000"/><rect x="2" y="11" width="1" height="1" fill="#909090"/><rect x="3" y="11" width="7" height="1" fill="#c0c0c0"/><rect x="10" y="11" width="1" height="1" fill="#808080"/><rect x="11" y="11" width="1" height="1" fill="#000000"/><rect x="2" y="12" width="1" height="1" fill="#909090"/><rect x="3" y="12" width="7" height="1" fill="#c0c0c0"/><rect x="10" y="12" width="1" height="1" fill="#808080"/><rect x="11" y="12" width="1" height="1" fill="#000000"/><rect x="2" y="13" width="1" height="1" fill="#909090"/><rect x="3" y="13" width="7" height="1" fill="#c0c0c0"/><rect x="10" y="13" width="1" height="1" fill="#808080"/><rect x="11" y="13" width="1" height="1" fill="#000000"/><rect x="2" y="14" width="1" height="1" fill="#909090"/><rect x="3" y="14" width="3" height="1" fill="#c0c0c0"/><rect x="6" y="14" width="2" height="1" fill="#ff0000"/><rect x="8" y="14" width="2" height="1" fill="#c0c0c0"/><rect x="10" y="14" width="2" height="1" fill="#000000"/><rect x="3" y="15" width="8" height="1" fill="#000000"/><rect x="4" y="16" width="6" height="1" fill="#000000"/></svg>
<span class="t" style="left:44.2px;top:144px;font-size:11px;color:#000;letter-spacing:0.025px"><i>127.0.0.1 [win2019-1.sec.com]</i></span>
<svg class="a" style="left:27px;top:150px" width="9" height="9"><use href="#bp"/></svg>
<svg class="a" style="left:42px;top:145px" width="17" height="17"><use href="#farm"/></svg>
<span class="t" style="left:61.4px;top:160px;font-size:11px;color:#000;letter-spacing:-0.100px"><i>DC=sec,DC=com</i></span>
<svg class="a" style="left:27px;top:166px" width="9" height="9"><use href="#bm"/></svg>
<svg class="a" style="left:42px;top:161px" width="16" height="15" shape-rendering="crispEdges"><rect x="0" y="1" width="13" height="1" fill="#909090"/><rect x="0" y="2" width="1" height="1" fill="#909090"/><rect x="1" y="2" width="11" height="1" fill="#ffffff"/><rect x="12" y="2" width="1" height="1" fill="#b8b8b8"/><rect x="13" y="2" width="1" height="1" fill="#808080"/><rect x="0" y="3" width="1" height="1" fill="#909090"/><rect x="1" y="3" width="11" height="1" fill="#ffffff"/><rect x="12" y="3" width="1" height="1" fill="#b8b8b8"/><rect x="13" y="3" width="1" height="1" fill="#ffffff"/><rect x="14" y="3" width="1" height="1" fill="#808080"/><rect x="0" y="4" width="1" height="1" fill="#909090"/><rect x="1" y="4" width="1" height="1" fill="#ffffff"/><rect x="2" y="4" width="3" height="1" fill="#a0a0a0"/><rect x="5" y="4" width="2" height="1" fill="#ffffff"/><rect x="7" y="4" width="1" height="1" fill="#707070"/><rect x="8" y="4" width="4" height="1" fill="#ffffff"/><rect x="12" y="4" width="3" height="1" fill="#b8b8b8"/><rect x="15" y="4" width="1" height="1" fill="#909090"/><rect x="0" y="5" width="1" height="1" fill="#909090"/><rect x="1" y="5" width="6" height="1" fill="#ffffff"/><rect x="7" y="5" width="1" height="1" fill="#707070"/><rect x="8" y="5" width="7" height="1" fill="#ffffff"/><rect x="15" y="5" width="1" height="1" fill="#909090"/><rect x="0" y="6" width="1" height="1" fill="#909090"/><rect x="1" y="6" width="3" height="1" fill="#ffffff"/><rect x="4" y="6" width="7" height="1" fill="#707070"/><rect x="11" y="6" width="4" height="1" fill="#ffffff"/><rect x="15" y="6" width="1" height="1" fill="#909090"/><rect x="0" y="7" width="1" height="1" fill="#909090"/><rect x="1" y="7" width="3" height="1" fill="#ffffff"/><rect x="4" y="7" width="1" height="1" fill="#707070"/><rect x="5" y="7" width="5" height="1" fill="#ffffff"/><rect x="10" y="7" width="1" height="1" fill="#707070"/><rect x="11" y="7" width="4" height="1" fill="#ffffff"/><rect x="15" y="7" width="1" height="1" fill="#909090"/><rect x="0" y="8" width="1" height="1" fill="#909090"/><rect x="1" y="8" width="3" height="1" fill="#ffffff"/><rect x="4" y="8" width="1" height="1" fill="#707070"/><rect x="5" y="8" width="5" height="1" fill="#ffffff"/><rect x="10" y="8" width="1" height="1" fill="#707070"/><rect x="11" y="8" width="4" height="1" fill="#ffffff"/><rect x="15" y="8" width="1" height="1" fill="#909090"/><rect x="0" y="9" width="1" height="1" fill="#909090"/><rect x="1" y="9" width="1" height="1" fill="#ffffff"/><rect x="2" y="9" width="5" height="1" fill="#707070"/><rect x="7" y="9" width="1" height="1" fill="#ffffff"/><rect x="8" y="9" width="5" height="1" fill="#707070"/><rect x="13" y="9" width="2" height="1" fill="#ffffff"/><rect x="15" y="9" width="1" height="1" fill="#909090"/><rect x="0" y="10" width="1" height="1" fill="#909090"/><rect x="1" y="10" width="1" height="1" fill="#ffffff"/><rect x="2" y="10" width="1" height="1" fill="#707070"/><rect x="3" y="10" width="3" height="1" fill="#ffffff"/><rect x="6" y="10" width="1" height="1" fill="#707070"/><rect x="7" y="10" width="1" height="1" fill="#ffffff"/><rect x="8" y="10" width="1" height="1" fill="#707070"/><rect x="9" y="10" width="3" height="1" fill="#ffffff"/><rect x="12" y="10" width="1" height="1" fill="#707070"/><rect x="13" y="10" width="2" height="1" fill="#ffffff"/><rect x="15" y="10" width="1" height="1" fill="#909090"/><rect x="0" y="11" width="1" height="1" fill="#606060"/><rect x="1" y="11" width="1" height="1" fill="#ffffff"/><rect x="2" y="11" width="1" height="1" fill="#707070"/><rect x="3" y="11" width="3" height="1" fill="#ffffff"/><rect x="6" y="11" width="1" height="1" fill="#707070"/><rect x="7" y="11" width="1" height="1" fill="#ffffff"/><rect x="8" y="11" width="1" height="1" fill="#707070"/><rect x="9" y="11" width="3" height="1" fill="#ffffff"/><rect x="12" y="11" width="1" height="1" fill="#707070"/><rect x="13" y="11" width="2" height="1" fill="#ffffff"/><rect x="15" y="11" width="1" height="1" fill="#606060"/><rect x="0" y="12" width="1" height="1" fill="#606060"/><rect x="1" y="12" width="14" height="1" fill="#ffffff"/><rect x="15" y="12" width="1" height="1" fill="#606060"/><rect x="0" y="13" width="1" height="1" fill="#606060"/><rect x="1" y="13" width="14" height="1" fill="#ffffff"/><rect x="15" y="13" width="1" height="1" fill="#606060"/><rect x="0" y="14" width="16" height="1" fill="#606060"/></svg>
<div class="a" style="left:61px;top:162px;width:178px;height:16px;background:#0078d7;"></div>
<span class="t" style="left:63.0px;top:176px;font-size:11px;color:#fff;letter-spacing:-0.097px"><i>CN=Configuration,DC=sec,DC=com</i></span>
<svg class="a" style="left:27px;top:358px" width="9" height="9"><use href="#bp"/></svg>
<svg class="a" style="left:43px;top:355px" width="15" height="13"><use href="#yf"/></svg>
<span class="t" style="left:62.0px;top:368px;font-size:11px;color:#000;letter-spacing:-0.119px"><i>CN=Schema,CN=Configuration,DC=sec,DC=</i></span>
<svg class="a" style="left:27px;top:374px" width="9" height="9"><use href="#bp"/></svg>
<svg class="a" style="left:42px;top:369px" width="17" height="17"><use href="#farm"/></svg>
<span class="t" style="left:61.0px;top:384px;font-size:11px;color:#000;letter-spacing:-0.243px"><i>DC=DomainDnsZones,DC=sec,DC=com</i></span>
<svg class="a" style="left:27px;top:390px" width="9" height="9"><use href="#bp"/></svg>
<svg class="a" style="left:42px;top:385px" width="17" height="17"><use href="#farm"/></svg>
<span class="t" style="left:61.0px;top:400px;font-size:11px;color:#000;letter-spacing:-0.143px"><i>DC=ForestDnsZones,DC=sec,DC=com</i></span>
<svg class="a" style="left:46px;top:182px" width="9" height="9"><use href="#bp"/></svg>
<svg class="a" style="left:61px;top:179px" width="14" height="13"><use href="#gf"/></svg>
<span class="t" style="left:81.6px;top:192px;font-size:11px;color:#000;letter-spacing:-0.094px"><i>CN=Deleted Objects</i></span>
<svg class="a" style="left:46px;top:198px" width="9" height="9"><use href="#bp"/></svg>
<svg class="a" style="left:61px;top:195px" width="14" height="13"><use href="#gf"/></svg>
<span class="t" style="left:81.6px;top:208px;font-size:11px;color:#000;letter-spacing:-0.295px"><i>CN=DisplaySpecifiers</i></span>
<svg class="a" style="left:46px;top:214px" width="9" height="9"><use href="#bp"/></svg>
<svg class="a" style="left:61px;top:211px" width="14" height="13"><use href="#gf"/></svg>
<span class="t" style="left:81.6px;top:224px;font-size:11px;color:#000;letter-spacing:-0.153px"><i>CN=Extended-Rights</i></span>
<svg class="a" style="left:46px;top:230px" width="9" height="9"><use href="#bp"/></svg>
<svg class="a" style="left:61px;top:227px" width="14" height="13"><use href="#gf"/></svg>
<span class="t" style="left:81.6px;top:240px;font-size:11px;color:#000;letter-spacing:-0.113px"><i>CN=ForestUpdates</i></span>
<svg class="a" style="left:46px;top:246px" width="9" height="9"><use href="#bp"/></svg>
<svg class="a" style="left:62px;top:243px" width="15" height="13"><use href="#yf"/></svg>
<span class="t" style="left:81.6px;top:256px;font-size:11px;color:#000;letter-spacing:-0.165px"><i>CN=LostAndFoundConfig</i></span>
<svg class="a" style="left:46px;top:262px" width="9" height="9"><use href="#bp"/></svg>
<svg class="a" style="left:62px;top:259px" width="15" height="13"><use href="#yf"/></svg>
<span class="t" style="left:81.6px;top:272px;font-size:11px;color:#000;letter-spacing:-0.431px"><i>CN=NTDS Quotas</i></span>
<svg class="a" style="left:46px;top:278px" width="9" height="9"><use href="#bp"/></svg>
<svg class="a" style="left:62px;top:275px" width="15" height="13"><use href="#yf"/></svg>
<span class="t" style="left:81.6px;top:288px;font-size:11px;color:#000;letter-spacing:-0.117px"><i>CN=Partitions</i></span>
<svg class="a" style="left:46px;top:294px" width="9" height="9"><use href="#bp"/></svg>
<svg class="a" style="left:62px;top:291px" width="15" height="13"><use href="#yf"/></svg>
<span class="t" style="left:81.6px;top:304px;font-size:11px;color:#000;letter-spacing:-0.260px"><i>CN=Physical Locations</i></span>
<svg class="a" style="left:46px;top:310px" width="9" height="9"><use href="#bp"/></svg>
<svg class="a" style="left:61px;top:307px" width="14" height="13"><use href="#gf"/></svg>
<span class="t" style="left:81.6px;top:320px;font-size:11px;color:#000;letter-spacing:-0.260px"><i>CN=Services</i></span>
<svg class="a" style="left:46px;top:326px" width="9" height="9"><use href="#bp"/></svg>
<svg class="a" style="left:61px;top:323px" width="14" height="13"><use href="#gf"/></svg>
<span class="t" style="left:81.6px;top:336px;font-size:11px;color:#000;letter-spacing:-0.357px"><i>CN=Sites</i></span>
<svg class="a" style="left:46px;top:342px" width="9" height="9"><use href="#bp"/></svg>
<svg class="a" style="left:61px;top:339px" width="14" height="13"><use href="#gf"/></svg>
<span class="t" style="left:81.6px;top:352px;font-size:11px;color:#000;letter-spacing:-0.265px"><i>CN=WellKnown Security Principals</i></span>
</div>
<div class="a" style="left:436px;top:114px;width:1px;height:24px;background:#e5e5e5;"></div>
<div class="a" style="left:586px;top:114px;width:1px;height:24px;background:#e5e5e5;"></div>
<div class="a" style="left:631px;top:114px;width:1px;height:24px;background:#e5e5e5;"></div>
<span class="t" style="left:292.9px;top:132px;font-size:11px;color:#000;letter-spacing:0.163px"><i>Attribute</i></span>
<span class="t" style="left:442.9px;top:132px;font-size:11px;color:#000;letter-spacing:-0.120px"><i>Syntax</i></span>
<span class="t" style="left:592.9px;top:132px;font-size:11px;color:#000;letter-spacing:-0.200px"><i>Count</i></span>
<span class="t" style="left:638.0px;top:132px;font-size:11px;color:#000;letter-spacing:-0.286px"><i>Value(s)</i></span>
<svg class="a" style="left:292px;top:137px" width="14" height="17"><use href="#at"/></svg>
<span class="t" style="left:309.0px;top:153px;font-size:11px;color:#000;letter-spacing:-0.700px"><i>cn</i></span>
<span class="t" style="left:441.7px;top:153px;font-size:11px;color:#000;letter-spacing:0.014px"><i>DirectoryString</i></span>
<span class="t" style="left:593.5px;top:153px;font-size:11px;color:#000;letter-spacing:0.000px"><i>1</i></span>
<span class="t" style="left:638.3px;top:153px;font-size:11px;color:#000;letter-spacing:-0.117px"><i>Configuration</i></span>
<svg class="a" style="left:292px;top:154px" width="14" height="17"><use href="#at"/></svg>
<span class="t" style="left:309.0px;top:170px;font-size:11px;color:#000;letter-spacing:-0.375px"><i>distinguishedName</i></span>
<span class="t" style="left:441.7px;top:170px;font-size:11px;color:#000;letter-spacing:-0.300px"><i>DN</i></span>
<span class="t" style="left:593.5px;top:170px;font-size:11px;color:#000;letter-spacing:0.000px"><i>1</i></span>
<span class="t" style="left:638.0px;top:170px;font-size:11px;color:#000;letter-spacing:-0.103px"><i>CN=Configuration,DC=sec,DC=com</i></span>
<svg class="a" style="left:292px;top:171px" width="14" height="17"><use href="#at"/></svg>
<span class="t" style="left:309.0px;top:187px;font-size:11px;color:#000;letter-spacing:-0.391px"><i>dSASignature</i></span>
<span class="t" style="left:442.7px;top:187px;font-size:11px;color:#000;letter-spacing:-0.040px"><i>OctetString</i></span>
<span class="t" style="left:593.5px;top:187px;font-size:11px;color:#000;letter-spacing:0.000px"><i>1</i></span>
<span class="t" style="left:638.5px;top:187px;font-size:11px;color:#000;letter-spacing:-0.225px"><i>1 0 0 0 40 0 0 0 0 0 0 0 0 0 0 0 0 0 0 0 0 0 0 0 0 0 0 0</i></span>
<svg class="a" style="left:292px;top:188px" width="14" height="17"><use href="#at"/></svg>
<span class="t" style="left:309.0px;top:204px;font-size:11px;color:#000;letter-spacing:-0.270px"><i>dSCorePropagationData</i></span>
<span class="t" style="left:442.7px;top:204px;font-size:11px;color:#000;letter-spacing:-0.407px"><i>GeneralizedTime</i></span>
<span class="t" style="left:593.5px;top:204px;font-size:11px;color:#000;letter-spacing:0.000px"><i>1</i></span>
<span class="t" style="left:637.0px;top:204px;font-size:11px;color:#000;letter-spacing:0.127px"><i>1601/1/1 8:00:00</i></span>
<svg class="a" style="left:292px;top:205px" width="14" height="17"><use href="#at"/></svg>
<span class="t" style="left:309.0px;top:221px;font-size:11px;color:#000;letter-spacing:-0.182px"><i>instanceType</i></span>
<span class="t" style="left:441.7px;top:221px;font-size:11px;color:#000;letter-spacing:0.300px"><i>Integer</i></span>
<span class="t" style="left:593.5px;top:221px;font-size:11px;color:#000;letter-spacing:0.000px"><i>1</i></span>
<span class="t" style="left:637.5px;top:221px;font-size:11px;color:#000;letter-spacing:0.100px"><i>13</i></span>
<svg class="a" style="left:292px;top:222px" width="14" height="17"><use href="#at"/></svg>
<span class="t" style="left:309.0px;top:238px;font-size:11px;color:#000;letter-spacing:-0.311px"><i>masteredBy</i></span>
<span class="t" style="left:441.7px;top:238px;font-size:11px;color:#000;letter-spacing:-0.300px"><i>DN</i></span>
<span class="t" style="left:593.5px;top:238px;font-size:11px;color:#000;letter-spacing:0.000px"><i>2</i></span>
<span class="t" style="left:638.0px;top:238px;font-size:11px;color:#000;letter-spacing:-0.148px"><i>CN=NTDS Settings,CN=WIN2019-2,CN=</i></span>
<svg class="a" style="left:292px;top:239px" width="14" height="17"><use href="#at"/></svg>
<span class="t" style="left:309.0px;top:255px;font-size:11px;color:#000;letter-spacing:-0.421px"><i>msDs-masteredBy</i></span>
<span class="t" style="left:441.7px;top:255px;font-size:11px;color:#000;letter-spacing:-0.300px"><i>DN</i></span>
<span class="t" style="left:593.5px;top:255px;font-size:11px;color:#000;letter-spacing:0.000px"><i>2</i></span>
<span class="t" style="left:638.0px;top:255px;font-size:11px;color:#000;letter-spacing:-0.148px"><i>CN=NTDS Settings,CN=WIN2019-2,CN=</i></span>
<svg class="a" style="left:292px;top:256px" width="14" height="17"><use href="#at"/></svg>
<span class="t" style="left:309.0px;top:272px;font-size:11px;color:#000;letter-spacing:-0.640px"><i>msDS-NcType</i></span>
<span class="t" style="left:441.7px;top:272px;font-size:11px;color:#000;letter-spacing:0.300px"><i>Integer</i></span>
<span class="t" style="left:593.5px;top:272px;font-size:11px;color:#000;letter-spacing:0.000px"><i>1</i></span>
<span class="t" style="left:637.5px;top:272px;font-size:11px;color:#000;letter-spacing:0.050px"><i>0</i></span>
<svg class="a" style="left:292px;top:273px" width="14" height="17"><use href="#at"/></svg>
<span class="t" style="left:309.0px;top:289px;font-size:11px;color:#000;letter-spacing:-0.700px"><i>name</i></span>
<span class="t" style="left:441.7px;top:289px;font-size:11px;color:#000;letter-spacing:0.014px"><i>DirectoryString</i></span>
<span class="t" style="left:593.5px;top:289px;font-size:11px;color:#000;letter-spacing:0.000px"><i>1</i></span>
<span class="t" style="left:638.3px;top:289px;font-size:11px;color:#000;letter-spacing:-0.117px"><i>Configuration</i></span>
<svg class="a" style="left:292px;top:290px" width="14" height="17"><use href="#at"/></svg>
<span class="t" style="left:308.6px;top:306px;font-size:11px;color:#000;letter-spacing:-0.200px"><i>nTSecurityDescriptor</i></span>
<span class="t" style="left:441.5px;top:306px;font-size:11px;color:#000;letter-spacing:-0.205px"><i>NTSecurityDescriptor</i></span>
<span class="t" style="left:593.5px;top:306px;font-size:11px;color:#000;letter-spacing:0.000px"><i>1</i></span>
<span class="t" style="left:637.0px;top:306px;font-size:11px;color:#000;letter-spacing:0.131px"><i>D:(OA;;CR;1131f6aa-9c07-11d1-f79f-00</i></span>
<svg class="a" style="left:292px;top:307px" width="14" height="17"><use href="#at"/></svg>
<span class="t" style="left:309.0px;top:323px;font-size:11px;color:#000;letter-spacing:-0.023px"><i>objectCategory</i></span>
<span class="t" style="left:441.7px;top:323px;font-size:11px;color:#000;letter-spacing:-0.300px"><i>DN</i></span>
<span class="t" style="left:593.5px;top:323px;font-size:11px;color:#000;letter-spacing:0.000px"><i>1</i></span>
<span class="t" style="left:638.0px;top:323px;font-size:11px;color:#000;letter-spacing:-0.194px"><i>CN=Configuration,CN=Schema,CN=Conf</i></span>
<svg class="a" style="left:292px;top:324px" width="14" height="17"><use href="#at"/></svg>
<span class="t" style="left:309.0px;top:340px;font-size:11px;color:#000;letter-spacing:-0.260px"><i>objectClass</i></span>
<span class="t" style="left:442.7px;top:340px;font-size:11px;color:#000;letter-spacing:-0.400px"><i>OID</i></span>
<span class="t" style="left:593.5px;top:340px;font-size:11px;color:#000;letter-spacing:0.000px"><i>2</i></span>
<span class="t" style="left:638.0px;top:340px;font-size:11px;color:#000;letter-spacing:0.069px"><i>top;configuration</i></span>
<svg class="a" style="left:292px;top:341px" width="14" height="17"><use href="#at"/></svg>
<span class="t" style="left:309.0px;top:357px;font-size:11px;color:#000;letter-spacing:-0.289px"><i>objectGUID</i></span>
<span class="t" style="left:442.7px;top:357px;font-size:11px;color:#000;letter-spacing:-0.040px"><i>OctetString</i></span>
<span class="t" style="left:593.5px;top:357px;font-size:11px;color:#000;letter-spacing:0.000px"><i>1</i></span>
<span class="t" style="left:638.0px;top:357px;font-size:11px;color:#000;letter-spacing:-0.444px"><i>{E51F6EB4-B32F-423B-A7CF-FA0E4BACE</i></span>
<svg class="a" style="left:292px;top:358px" width="14" height="17"><use href="#at"/></svg>
<span class="t" style="left:309.0px;top:374px;font-size:11px;color:#000;letter-spacing:-0.176px"><i>replUpToDateVector</i></span>
<span class="t" style="left:442.7px;top:374px;font-size:11px;color:#000;letter-spacing:-0.040px"><i>OctetString</i></span>
<span class="t" style="left:593.5px;top:374px;font-size:11px;color:#000;letter-spacing:0.000px"><i>1</i></span>
<span class="t" style="left:638.5px;top:374px;font-size:11px;color:#000;letter-spacing:-0.110px"><i>2 0 0 0 0 0 0 0 2 0 0 0 0 0 0 0 51 178 117</i></span>
<svg class="a" style="left:292px;top:375px" width="14" height="17"><use href="#at"/></svg>
<span class="t" style="left:309.0px;top:391px;font-size:11px;color:#000;letter-spacing:-0.486px"><i>repsFrom</i></span>
<span class="t" style="left:441.7px;top:391px;font-size:11px;color:#000;letter-spacing:-0.420px"><i>ReplicaLink</i></span>
<span class="t" style="left:593.5px;top:391px;font-size:11px;color:#000;letter-spacing:0.000px"><i>1</i></span>
<span class="t" style="left:638.5px;top:391px;font-size:11px;color:#000;letter-spacing:-0.128px"><i>2 0 0 0 0 0 0 0 220 1 0 0 7 0 0 0 75 116 2</i></span>
<svg class="a" style="left:292px;top:392px" width="14" height="17"><use href="#at"/></svg>
<span class="t" style="left:309.0px;top:408px;font-size:11px;color:#000;letter-spacing:-0.033px"><i>showInAdvancedViewO...</i></span>
<span class="t" style="left:441.7px;top:408px;font-size:11px;color:#000;letter-spacing:-0.250px"><i>Boolean</i></span>
<span class="t" style="left:593.5px;top:408px;font-size:11px;color:#000;letter-spacing:0.000px"><i>1</i></span>
<span class="t" style="left:638.0px;top:408px;font-size:11px;color:#000;letter-spacing:-0.700px"><i>TRUE</i></span>
<svg class="a" style="left:292px;top:409px" width="14" height="17"><use href="#at"/></svg>
<span class="t" style="left:309.0px;top:425px;font-size:11px;color:#000;letter-spacing:-0.383px"><i>subRefs</i></span>
<span class="t" style="left:441.7px;top:425px;font-size:11px;color:#000;letter-spacing:-0.300px"><i>DN</i></span>
<span class="t" style="left:593.5px;top:425px;font-size:11px;color:#000;letter-spacing:0.000px"><i>1</i></span>
<span class="t" style="left:638.0px;top:425px;font-size:11px;color:#000;letter-spacing:-0.085px"><i>CN=Schema,CN=Configuration,DC=sec,D</i></span>
<svg class="a" style="left:292px;top:426px" width="14" height="17"><use href="#at"/></svg>
<span class="t" style="left:309.0px;top:442px;font-size:11px;color:#000;letter-spacing:-0.567px"><i>uSNChanged</i></span>
<span class="t" style="left:441.7px;top:442px;font-size:11px;color:#000;letter-spacing:0.371px"><i>Integer8</i></span>
<span class="t" style="left:593.5px;top:442px;font-size:11px;color:#000;letter-spacing:0.000px"><i>1</i></span>
<span class="t" style="left:638.0px;top:442px;font-size:11px;color:#000;letter-spacing:-0.540px"><i>0xB24F</i></span>
<svg class="a" style="left:292px;top:443px" width="14" height="17"><use href="#at"/></svg>
<span class="t" style="left:309.0px;top:459px;font-size:11px;color:#000;letter-spacing:-0.300px"><i>uSNCreated</i></span>
<span class="t" style="left:441.7px;top:459px;font-size:11px;color:#000;letter-spacing:0.371px"><i>Integer8</i></span>
<span class="t" style="left:593.5px;top:459px;font-size:11px;color:#000;letter-spacing:0.000px"><i>1</i></span>
<span class="t" style="left:638.0px;top:459px;font-size:11px;color:#000;letter-spacing:-0.140px"><i>0x1005</i></span>
<svg class="a" style="left:292px;top:460px" width="14" height="17"><use href="#at"/></svg>
<span class="t" style="left:309.0px;top:476px;font-size:11px;color:#000;letter-spacing:-0.260px"><i>wellKnownObjects</i></span>
<span class="t" style="left:442.7px;top:476px;font-size:11px;color:#000;letter-spacing:-0.700px"><i>ORName</i></span>
<span class="t" style="left:593.5px;top:476px;font-size:11px;color:#000;letter-spacing:0.000px"><i>3</i></span>
<span class="t" style="left:638.0px;top:476px;font-size:11px;color:#000;letter-spacing:-0.067px"><i>98 39 240 175 31 194 65 13 142 59 177 6</i></span>
<svg class="a" style="left:292px;top:477px" width="14" height="17"><use href="#at"/></svg>
<span class="t" style="left:309.0px;top:493px;font-size:11px;color:#000;letter-spacing:-0.290px"><i>whenChanged</i></span>
<span class="t" style="left:442.7px;top:493px;font-size:11px;color:#000;letter-spacing:-0.407px"><i>GeneralizedTime</i></span>
<span class="t" style="left:593.5px;top:493px;font-size:11px;color:#000;letter-spacing:0.000px"><i>1</i></span>
<span class="t" style="left:638.1px;top:493px;font-size:11px;color:#000;letter-spacing:0.082px"><i>2024/2/17 18:46:51</i></span>
<svg class="a" style="left:292px;top:494px" width="14" height="17"><use href="#at"/></svg>
<span class="t" style="left:309.0px;top:510px;font-size:11px;color:#000;letter-spacing:-0.080px"><i>whenCreated</i></span>
<span class="t" style="left:442.7px;top:510px;font-size:11px;color:#000;letter-spacing:-0.407px"><i>GeneralizedTime</i></span>
<span class="t" style="left:593.5px;top:510px;font-size:11px;color:#000;letter-spacing:0.000px"><i>1</i></span>
<span class="t" style="left:638.1px;top:510px;font-size:11px;color:#000;letter-spacing:0.047px"><i>2024/2/6 0:28:58</i></span>
<svg width="0" height="0" style="position:absolute" shape-rendering="crispEdges"><defs><symbol id="bm" viewBox="0 0 9 9"><rect x="1" y="0" width="7" height="1" fill="#909090"/><rect x="0" y="1" width="1" height="1" fill="#909090"/><rect x="1" y="1" width="7" height="1" fill="#ffffff"/><rect x="8" y="1" width="1" height="1" fill="#909090"/><rect x="0" y="2" width="1" height="1" fill="#909090"/><rect x="1" y="2" width="7" height="1" fill="#ffffff"/><rect x="8" y="2" width="1" height="1" fill="#909090"/><rect x="0" y="3" width="1" height="1" fill="#909090"/><rect x="1" y="3" width="7" height="1" fill="#ffffff"/><rect x="8" y="3" width="1" height="1" fill="#909090"/><rect x="0" y="4" width="1" height="1" fill="#909090"/><rect x="1" y="4" width="1" height="1" fill="#ffffff"/><rect x="2" y="4" width="5" height="1" fill="#2d4a8a"/><rect x="7" y="4" width="1" height="1" fill="#ffffff"/><rect x="8" y="4" width="1" height="1" fill="#909090"/><rect x="0" y="5" width="1" height="1" fill="#909090"/><rect x="1" y="5" width="7" height="1" fill="#ffffff"/><rect x="8" y="5" width="1" height="1" fill="#909090"/><rect x="0" y="6" width="1" height="1" fill="#909090"/><rect x="1" y="6" width="7" height="1" fill="#f4f4f4"/><rect x="8" y="6" width="1" height="1" fill="#909090"/><rect x="0" y="7" width="1" height="1" fill="#909090"/><rect x="1" y="7" width="7" height="1" fill="#e0e0e0"/><rect x="8" y="7" width="1" height="1" fill="#909090"/><rect x="1" y="8" width="7" height="1" fill="#909090"/></symbol><symbol id="bp" viewBox="0 0 9 9"><rect x="1" y="0" width="7" height="1" fill="#909090"/><rect x="0" y="1" width="1" height="1" fill="#909090"/><rect x="1" y="1" width="7" height="1" fill="#ffffff"/><rect x="8" y="1" width="1" height="1" fill="#909090"/><rect x="0" y="2" width="1" height="1" fill="#909090"/><rect x="1" y="2" width="3" height="1" fill="#ffffff"/><rect x="4" y="2" width="1" height="1" fill="#2d4a8a"/><rect x="5" y="2" width="3" height="1" fill="#ffffff"/><rect x="8" y="2" width="1" height="1" fill="#909090"/><rect x="0" y="3" width="1" height="1" fill="#909090"/><rect x="1" y="3" width="3" height="1" fill="#ffffff"/><rect x="4" y="3" width="1" height="1" fill="#2d4a8a"/><rect x="5" y="3" width="3" height="1" fill="#ffffff"/><rect x="8" y="3" width="1" height="1" fill="#909090"/><rect x="0" y="4" width="1" height="1" fill="#909090"/><rect x="1" y="4" width="1" height="1" fill="#ffffff"/><rect x="2" y="4" width="5" height="1" fill="#2d4a8a"/><rect x="7" y="4" width="1" height="1" fill="#ffffff"/><rect x="8" y="4" width="1" height="1" fill="#909090"/><rect x="0" y="5" width="1" height="1" fill="#909090"/><rect x="1" y="5" width="3" height="1" fill="#ffffff"/><rect x="4" y="5" width="1" height="1" fill="#2d4a8a"/><rect x="5" y="5" width="3" height="1" fill="#ffffff"/><rect x="8" y="5" width="1" height="1" fill="#909090"/><rect x="0" y="6" width="1" height="1" fill="#909090"/><rect x="1" y="6" width="3" height="1" fill="#f4f4f4"/><rect x="4" y="6" width="1" height="1" fill="#2d4a8a"/><rect x="5" y="6" width="3" height="1" fill="#f4f4f4"/><rect x="8" y="6" width="1" height="1" fill="#909090"/><rect x="0" y="7" width="1" height="1" fill="#909090"/><rect x="1" y="7" width="7" height="1" fill="#e0e0e0"/><rect x="8" y="7" width="1" height="1" fill="#909090"/><rect x="1" y="8" width="7" height="1" fill="#909090"/></symbol><symbol id="farm" viewBox="0 0 17 17"><rect x="5" y="1" width="6" height="1" fill="#909090"/><rect x="5" y="2" width="1" height="1" fill="#909090"/><rect x="6" y="2" width="1" height="1" fill="#c0c0c0"/><rect x="7" y="2" width="1" height="1" fill="#008080"/><rect x="8" y="2" width="1" height="1" fill="#000000"/><rect x="9" y="2" width="1" height="1" fill="#c0c0c0"/><rect x="10" y="2" width="1" height="1" fill="#909090"/><rect x="5" y="3" width="1" height="1" fill="#909090"/><rect x="6" y="3" width="4" height="1" fill="#ffffff"/><rect x="10" y="3" width="1" height="1" fill="#909090"/><rect x="1" y="4" width="6" height="1" fill="#909090"/><rect x="7" y="4" width="3" height="1" fill="#606060"/><rect x="10" y="4" width="6" height="1" fill="#909090"/><rect x="1" y="5" width="1" height="1" fill="#909090"/><rect x="2" y="5" width="1" height="1" fill="#c0c0c0"/><rect x="3" y="5" width="1" height="1" fill="#008080"/><rect x="4" y="5" width="1" height="1" fill="#000000"/><rect x="5" y="5" width="1" height="1" fill="#c0c0c0"/><rect x="6" y="5" width="1" height="1" fill="#909090"/><rect x="7" y="5" width="3" height="1" fill="#ffffff"/><rect x="10" y="5" width="1" height="1" fill="#909090"/><rect x="11" y="5" width="1" height="1" fill="#c0c0c0"/><rect x="12" y="5" width="1" height="1" fill="#008080"/><rect x="13" y="5" width="1" height="1" fill="#000000"/><rect x="14" y="5" width="1" height="1" fill="#c0c0c0"/><rect x="15" y="5" width="1" height="1" fill="#909090"/><rect x="1" y="6" width="1" height="1" fill="#909090"/><rect x="2" y="6" width="4" height="1" fill="#ffffff"/><rect x="6" y="6" width="1" height="1" fill="#909090"/><rect x="7" y="6" width="3" height="1" fill="#ffffff"/><rect x="10" y="6" width="1" height="1" fill="#909090"/><rect x="11" y="6" width="4" height="1" fill="#ffffff"/><rect x="15" y="6" width="1" height="1" fill="#909090"/><rect x="1" y="7" width="1" height="1" fill="#909090"/><rect x="2" y="7" width="4" height="1" fill="#606060"/><rect x="6" y="7" width="1" height="1" fill="#909090"/><rect x="7" y="7" width="3" height="1" fill="#606060"/><rect x="10" y="7" width="1" height="1" fill="#909090"/><rect x="11" y="7" width="4" height="1" fill="#606060"/><rect x="15" y="7" width="1" height="1" fill="#909090"/><rect x="1" y="8" width="1" height="1" fill="#909090"/><rect x="2" y="8" width="4" height="1" fill="#ffffff"/><rect x="6" y="8" width="1" height="1" fill="#909090"/><rect x="7" y="8" width="3" height="1" fill="#c0c0c0"/><rect x="10" y="8" width="1" height="1" fill="#909090"/><rect x="11" y="8" width="4" height="1" fill="#ffffff"/><rect x="15" y="8" width="1" height="1" fill="#909090"/><rect x="1" y="9" width="1" height="1" fill="#909090"/><rect x="2" y="9" width="4" height="1" fill="#ffffff"/><rect x="6" y="9" width="1" height="1" fill="#909090"/><rect x="7" y="9" width="3" height="1" fill="#c0c0c0"/><rect x="10" y="9" width="1" height="1" fill="#909090"/><rect x="11" y="9" width="4" height="1" fill="#ffffff"/><rect x="15" y="9" width="1" height="1" fill="#909090"/><rect x="1" y="10" width="1" height="1" fill="#909090"/><rect x="2" y="10" width="4" height="1" fill="#606060"/><rect x="6" y="10" width="1" height="1" fill="#909090"/><rect x="7" y="10" width="1" height="1" fill="#c0c0c0"/><rect x="8" y="10" width="1" height="1" fill="#00ff00"/><rect x="9" y="10" width="1" height="1" fill="#ffff00"/><rect x="10" y="10" width="1" height="1" fill="#909090"/><rect x="11" y="10" width="4" height="1" fill="#606060"/><rect x="15" y="10" width="1" height="1" fill="#909090"/><rect x="1" y="11" width="1" height="1" fill="#909090"/><rect x="2" y="11" width="4" height="1" fill="#c0c0c0"/><rect x="6" y="11" width="1" height="1" fill="#909090"/><rect x="7" y="11" width="2" height="1" fill="#00ff00"/><rect x="9" y="11" width="1" height="1" fill="#c0c0c0"/><rect x="10" y="11" width="1" height="1" fill="#909090"/><rect x="11" y="11" width="4" height="1" fill="#c0c0c0"/><rect x="15" y="11" width="1" height="1" fill="#909090"/><rect x="1" y="12" width="1" height="1" fill="#909090"/><rect x="2" y="12" width="4" height="1" fill="#c0c0c0"/><rect x="6" y="12" width="1" height="1" fill="#909090"/><rect x="7" y="12" width="3" height="1" fill="#606060"/><rect x="10" y="12" width="1" height="1" fill="#909090"/><rect x="11" y="12" width="4" height="1" fill="#c0c0c0"/><rect x="15" y="12" width="1" height="1" fill="#909090"/><rect x="1" y="13" width="1" height="1" fill="#909090"/><rect x="2" y="13" width="2" height="1" fill="#c0c0c0"/><rect x="4" y="13" width="1" height="1" fill="#00ff00"/><rect x="5" y="13" width="1" height="1" fill="#ffff00"/><rect x="6" y="13" width="1" height="1" fill="#909090"/><rect x="10" y="13" width="1" height="1" fill="#909090"/><rect x="11" y="13" width="2" height="1" fill="#c0c0c0"/><rect x="13" y="13" width="1" height="1" fill="#00ff00"/><rect x="14" y="13" width="1" height="1" fill="#ffff00"/><rect x="15" y="13" width="1" height="1" fill="#909090"/><rect x="1" y="14" width="1" height="1" fill="#909090"/><rect x="2" y="14" width="1" height="1" fill="#c0c0c0"/><rect x="3" y="14" width="2" height="1" fill="#00ff00"/><rect x="5" y="14" width="1" height="1" fill="#c0c0c0"/><rect x="6" y="14" width="1" height="1" fill="#909090"/><rect x="10" y="14" width="1" height="1" fill="#909090"/><rect x="11" y="14" width="1" height="1" fill="#c0c0c0"/><rect x="12" y="14" width="2" height="1" fill="#00ff00"/><rect x="14" y="14" width="1" height="1" fill="#c0c0c0"/><rect x="15" y="14" width="1" height="1" fill="#909090"/><rect x="1" y="15" width="6" height="1" fill="#606060"/><rect x="10" y="15" width="6" height="1" fill="#606060"/></symbol><symbol id="yf" viewBox="0 0 15 13"><rect x="2" y="0" width="5" height="1" fill="#808080"/><rect x="1" y="1" width="1" height="1" fill="#c0c0c0"/><rect x="2" y="1" width="1" height="1" fill="#ffff00"/><rect x="3" y="1" width="1" height="1" fill="#c0c0c0"/><rect x="4" y="1" width="1" height="1" fill="#ffff00"/><rect x="5" y="1" width="1" height="1" fill="#c0c0c0"/><rect x="6" y="1" width="1" height="1" fill="#ffff00"/><rect x="7" y="1" width="1" height="1" fill="#808080"/><rect x="0" y="2" width="1" height="1" fill="#808080"/><rect x="1" y="2" width="1" height="1" fill="#ffff00"/><rect x="2" y="2" width="1" height="1" fill="#c0c0c0"/><rect x="3" y="2" width="1" height="1" fill="#ffff00"/><rect x="4" y="2" width="1" height="1" fill="#c0c0c0"/><rect x="5" y="2" width="1" height="1" fill="#ffff00"/><rect x="6" y="2" width="1" height="1" fill="#c0c0c0"/><rect x="7" y="2" width="1" height="1" fill="#ffff00"/><rect x="8" y="2" width="6" height="1" fill="#808080"/><rect x="0" y="3" width="1" height="1" fill="#808080"/><rect x="1" y="3" width="13" height="1" fill="#ffffff"/><rect x="14" y="3" width="1" height="1" fill="#000000"/><rect x="0" y="4" width="1" height="1" fill="#808080"/><rect x="1" y="4" width="1" height="1" fill="#ffffff"/><rect x="2" y="4" width="1" height="1" fill="#ffff00"/><rect x="3" y="4" width="1" height="1" fill="#c0c0c0"/><rect x="4" y="4" width="1" height="1" fill="#ffff00"/><rect x="5" y="4" width="1" height="1" fill="#c0c0c0"/><rect x="6" y="4" width="1" height="1" fill="#ffff00"/><rect x="7" y="4" width="1" height="1" fill="#c0c0c0"/><rect x="8" y="4" width="1" height="1" fill="#ffff00"/><rect x="9" y="4" width="1" height="1" fill="#c0c0c0"/><rect x="10" y="4" width="1" height="1" fill="#ffff00"/><rect x="11" y="4" width="1" height="1" fill="#c0c0c0"/><rect x="12" y="4" width="1" height="1" fill="#ffff00"/><rect x="13" y="4" width="1" height="1" fill="#c0c0c0"/><rect x="14" y="4" width="1" height="1" fill="#000000"/><rect x="0" y="5" width="1" height="1" fill="#808080"/><rect x="1" y="5" width="1" height="1" fill="#ffffff"/><rect x="2" y="5" width="1" height="1" fill="#c0c0c0"/><rect x="3" y="5" width="1" height="1" fill="#ffff00"/><rect x="4" y="5" width="1" height="1" fill="#c0c0c0"/><rect x="5" y="5" width="1" height="1" fill="#ffff00"/><rect x="6" y="5" width="1" height="1" fill="#c0c0c0"/><rect x="7" y="5" width="1" height="1" fill="#ffff00"/><rect x="8" y="5" width="1" height="1" fill="#c0c0c0"/><rect x="9" y="5" width="1" height="1" fill="#ffff00"/><rect x="10" y="5" width="1" height="1" fill="#c0c0c0"/><rect x="11" y="5" width="1" height="1" fill="#ffff00"/><rect x="12" y="5" width="1" height="1" fill="#c0c0c0"/><rect x="13" y="5" width="1" height="1" fill="#ffff00"/><rect x="14" y="5" width="1" height="1" fill="#000000"/><rect x="0" y="6" width="1" height="1" fill="#808080"/><rect x="1" y="6" width="1" height="1" fill="#ffffff"/><rect x="2" y="6" width="1" height="1" fill="#ffff00"/><rect x="3" y="6" width="1" height="1" fill="#c0c0c0"/><rect x="4" y="6" width="1" height="1" fill="#ffff00"/><rect x="5" y="6" width="1" height="1" fill="#c0c0c0"/><rect x="6" y="6" width="1" height="1" fill="#ffff00"/><rect x="7" y="6" width="1" height="1" fill="#c0c0c0"/><rect x="8" y="6" width="1" height="1" fill="#ffff00"/><rect x="9" y="6" width="1" height="1" fill="#c0c0c0"/><rect x="10" y="6" width="1" height="1" fill="#ffff00"/><rect x="11" y="6" width="1" height="1" fill="#c0c0c0"/><rect x="12" y="6" width="1" height="1" fill="#ffff00"/><rect x="13" y="6" width="1" height="1" fill="#c0c0c0"/><rect x="14" y="6" width="1" height="1" fill="#000000"/><rect x="0" y="7" width="1" height="1" fill="#808080"/><rect x="1" y="7" width="1" height="1" fill="#ffffff"/><rect x="2" y="7" width="1" height="1" fill="#c0c0c0"/><rect x="3" y="7" width="1" height="1" fill="#ffff00"/><rect x="4" y="7" width="1" height="1" fill="#c0c0c0"/><rect x="5" y="7" width="1" height="1" fill="#ffff00"/><rect x="6" y="7" width="1" height="1" fill="#c0c0c0"/><rect x="7" y="7" width="1" height="1" fill="#ffff00"/><rect x="8" y="7" width="1" height="1" fill="#c0c0c0"/><rect x="9" y="7" width="1" height="1" fill="#ffff00"/><rect x="10" y="7" width="1" height="1" fill="#c0c0c0"/><rect x="11" y="7" width="1" height="1" fill="#ffff00"/><rect x="12" y="7" width="1" height="1" fill="#c0c0c0"/><rect x="13" y="7" width="1" height="1" fill="#ffff00"/><rect x="14" y="7" width="1" height="1" fill="#000000"/><rect x="0" y="8" width="1" height="1" fill="#808080"/><rect x="1" y="8" width="1" height="1" fill="#ffffff"/><rect x="2" y="8" width="1" height="1" fill="#ffff00"/><rect x="3" y="8" width="1" height="1" fill="#c0c0c0"/><rect x="4" y="8" width="1" height="1" fill="#ffff00"/><rect x="5" y="8" width="1" height="1" fill="#c0c0c0"/><rect x="6" y="8" width="1" height="1" fill="#ffff00"/><rect x="7" y="8" width="1" height="1" fill="#c0c0c0"/><rect x="8" y="8" width="1" height="1" fill="#ffff00"/><rect x="9" y="8" width="1" height="1" fill="#c0c0c0"/><rect x="10" y="8" width="1" height="1" fill="#ffff00"/><rect x="11" y="8" width="1" height="1" fill="#c0c0c0"/><rect x="12" y="8" width="1" height="1" fill="#ffff00"/><rect x="13" y="8" width="1" height="1" fill="#c0c0c0"/><rect x="14" y="8" width="1" height="1" fill="#000000"/><rect x="0" y="9" width="1" height="1" fill="#808080"/><rect x="1" y="9" width="1" height="1" fill="#ffffff"/><rect x="2" y="9" width="1" height="1" fill="#c0c0c0"/><rect x="3" y="9" width="1" height="1" fill="#ffff00"/><rect x="4" y="9" width="1" height="1" fill="#c0c0c0"/><rect x="5" y="9" width="1" height="1" fill="#ffff00"/><rect x="6" y="9" width="1" height="1" fill="#c0c0c0"/><rect x="7" y="9" width="1" height="1" fill="#ffff00"/><rect x="8" y="9" width="1" height="1" fill="#c0c0c0"/><rect x="9" y="9" width="1" height="1" fill="#ffff00"/><rect x="10" y="9" width="1" height="1" fill="#c0c0c0"/><rect x="11" y="9" width="1" height="1" fill="#ffff00"/><rect x="12" y="9" width="1" height="1" fill="#c0c0c0"/><rect x="13" y="9" width="1" height="1" fill="#ffff00"/><rect x="14" y="9" width="1" height="1" fill="#000000"/><rect x="0" y="10" width="1" height="1" fill="#808080"/><rect x="1" y="10" width="1" height="1" fill="#ffffff"/><rect x="2" y="10" width="1" height="1" fill="#ffff00"/><rect x="3" y="10" width="1" height="1" fill="#c0c0c0"/><rect x="4" y="10" width="1" height="1" fill="#ffff00"/><rect x="5" y="10" width="1" height="1" fill="#c0c0c0"/><rect x="6" y="10" width="1" height="1" fill="#ffff00"/><rect x="7" y="10" width="1" height="1" fill="#c0c0c0"/><rect x="8" y="10" width="1" height="1" fill="#ffff00"/><rect x="9" y="10" width="1" height="1" fill="#c0c0c0"/><rect x="10" y="10" width="1" height="1" fill="#ffff00"/><rect x="11" y="10" width="1" height="1" fill="#c0c0c0"/><rect x="12" y="10" width="1" height="1" fill="#ffff00"/><rect x="13" y="10" width="1" height="1" fill="#c0c0c0"/><rect x="14" y="10" width="1" height="1" fill="#000000"/><rect x="0" y="11" width="1" height="1" fill="#808080"/><rect x="1" y="11" width="1" height="1" fill="#ffffff"/><rect x="2" y="11" width="1" height="1" fill="#c0c0c0"/><rect x="3" y="11" width="1" height="1" fill="#ffff00"/><rect x="4" y="11" width="1" height="1" fill="#c0c0c0"/><rect x="5" y="11" width="1" height="1" fill="#ffff00"/><rect x="6" y="11" width="1" height="1" fill="#c0c0c0"/><rect x="7" y="11" width="1" height="1" fill="#ffff00"/><rect x="8" y="11" width="1" height="1" fill="#c0c0c0"/><rect x="9" y="11" width="1" height="1" fill="#ffff00"/><rect x="10" y="11" width="1" height="1" fill="#c0c0c0"/><rect x="11" y="11" width="1" height="1" fill="#ffff00"/><rect x="12" y="11" width="1" height="1" fill="#c0c0c0"/><rect x="13" y="11" width="1" height="1" fill="#ffff00"/><rect x="14" y="11" width="1" height="1" fill="#000000"/><rect x="1" y="12" width="14" height="1" fill="#000000"/></symbol><symbol id="gf" viewBox="0 0 14 13"><rect x="6" y="0" width="1" height="1" fill="#808000"/><rect x="7" y="0" width="6" height="1" fill="#e0e0e0"/><rect x="13" y="0" width="1" height="1" fill="#808000"/><rect x="0" y="1" width="1" height="1" fill="#000000"/><rect x="1" y="1" width="6" height="1" fill="#606060"/><rect x="7" y="1" width="1" height="1" fill="#e0e0e0"/><rect x="8" y="1" width="2" height="1" fill="#ffffff"/><rect x="10" y="1" width="2" height="1" fill="#e0e0e0"/><rect x="12" y="1" width="1" height="1" fill="#909090"/><rect x="13" y="1" width="1" height="1" fill="#e0e0e0"/><rect x="0" y="2" width="1" height="1" fill="#c0c0c0"/><rect x="1" y="2" width="1" height="1" fill="#ffffff"/><rect x="2" y="2" width="5" height="1" fill="#c0c0c0"/><rect x="7" y="2" width="1" height="1" fill="#909090"/><rect x="8" y="2" width="6" height="1" fill="#e0e0e0"/><rect x="0" y="3" width="1" height="1" fill="#c0c0c0"/><rect x="1" y="3" width="1" height="1" fill="#ffffff"/><rect x="2" y="3" width="4" height="1" fill="#c0c0c0"/><rect x="6" y="3" width="1" height="1" fill="#ffffff"/><rect x="7" y="3" width="7" height="1" fill="#808080"/><rect x="0" y="4" width="1" height="1" fill="#c0c0c0"/><rect x="1" y="4" width="1" height="1" fill="#ffffff"/><rect x="2" y="4" width="11" height="1" fill="#c0c0c0"/><rect x="13" y="4" width="1" height="1" fill="#808080"/><rect x="0" y="5" width="13" height="1" fill="#c0c0c0"/><rect x="13" y="5" width="1" height="1" fill="#808080"/><rect x="0" y="6" width="13" height="1" fill="#c0c0c0"/><rect x="13" y="6" width="1" height="1" fill="#808080"/><rect x="0" y="7" width="13" height="1" fill="#c0c0c0"/><rect x="13" y="7" width="1" height="1" fill="#808080"/><rect x="0" y="8" width="13" height="1" fill="#c0c0c0"/><rect x="13" y="8" width="1" height="1" fill="#808080"/><rect x="0" y="9" width="13" height="1" fill="#c0c0c0"/><rect x="13" y="9" width="1" height="1" fill="#808080"/><rect x="0" y="10" width="13" height="1" fill="#c0c0c0"/><rect x="13" y="10" width="1" height="1" fill="#808080"/><rect x="0" y="11" width="13" height="1" fill="#c0c0c0"/><rect x="13" y="11" width="1" height="1" fill="#808080"/><rect x="0" y="12" width="14" height="1" fill="#808080"/></symbol><symbol id="at" viewBox="0 0 14 17"><rect x="1" y="1" width="10" height="1" fill="#808080"/><rect x="11" y="1" width="1" height="1" fill="#e0e0e0"/><rect x="1" y="2" width="1" height="1" fill="#808080"/><rect x="2" y="2" width="9" height="1" fill="#ffffff"/><rect x="11" y="2" width="1" height="1" fill="#808080"/><rect x="12" y="2" width="1" height="1" fill="#e0e0e0"/><rect x="1" y="3" width="1" height="1" fill="#808080"/><rect x="2" y="3" width="9" height="1" fill="#ffffff"/><rect x="11" y="3" width="1" height="1" fill="#e0e0e0"/><rect x="12" y="3" width="1" height="1" fill="#ffffff"/><rect x="13" y="3" width="1" height="1" fill="#e0e0e0"/><rect x="1" y="4" width="1" height="1" fill="#808080"/><rect x="2" y="4" width="8" height="1" fill="#ffffff"/><rect x="10" y="4" width="4" height="1" fill="#000000"/><rect x="1" y="5" width="1" height="1" fill="#808080"/><rect x="2" y="5" width="11" height="1" fill="#ffffff"/><rect x="13" y="5" width="1" height="1" fill="#000000"/><rect x="1" y="6" width="1" height="1" fill="#808080"/><rect x="2" y="6" width="11" height="1" fill="#ffffff"/><rect x="13" y="6" width="1" height="1" fill="#000000"/><rect x="1" y="7" width="1" height="1" fill="#808080"/><rect x="2" y="7" width="1" height="1" fill="#ffffff"/><rect x="3" y="7" width="1" height="1" fill="#ff0000"/><rect x="4" y="7" width="3" height="1" fill="#ffffff"/><rect x="7" y="7" width="4" height="1" fill="#000000"/><rect x="11" y="7" width="2" height="1" fill="#ffffff"/><rect x="13" y="7" width="1" height="1" fill="#000000"/><rect x="1" y="8" width="1" height="1" fill="#808080"/><rect x="2" y="8" width="2" height="1" fill="#ffffff"/><rect x="4" y="8" width="2" height="1" fill="#ff0000"/><rect x="6" y="8" width="1" height="1" fill="#000000"/><rect x="7" y="8" width="1" height="1" fill="#ff0000"/><rect x="8" y="8" width="1" height="1" fill="#000000"/><rect x="9" y="8" width="1" height="1" fill="#00ff00"/><rect x="10" y="8" width="1" height="1" fill="#000000"/><rect x="11" y="8" width="2" height="1" fill="#ffffff"/><rect x="13" y="8" width="1" height="1" fill="#000000"/><rect x="1" y="9" width="1" height="1" fill="#808080"/><rect x="2" y="9" width="1" height="1" fill="#ffffff"/><rect x="3" y="9" width="1" height="1" fill="#0000ff"/><rect x="4" y="9" width="2" height="1" fill="#ffffff"/><rect x="6" y="9" width="5" height="1" fill="#000000"/><rect x="11" y="9" width="2" height="1" fill="#ffffff"/><rect x="13" y="9" width="1" height="1" fill="#000000"/><rect x="1" y="10" width="1" height="1" fill="#808080"/><rect x="2" y="10" width="2" height="1" fill="#ffffff"/><rect x="4" y="10" width="2" height="1" fill="#0000ff"/><rect x="6" y="10" width="1" height="1" fill="#000000"/><rect x="7" y="10" width="1" height="1" fill="#0000ff"/><rect x="8" y="10" width="1" height="1" fill="#000000"/><rect x="9" y="10" width="1" height="1" fill="#ffff00"/><rect x="10" y="10" width="1" height="1" fill="#000000"/><rect x="11" y="10" width="2" height="1" fill="#ffffff"/><rect x="13" y="10" width="1" height="1" fill="#000000"/><rect x="1" y="11" width="1" height="1" fill="#808080"/><rect x="2" y="11" width="1" height="1" fill="#ffffff"/><rect x="3" y="11" width="1" height="1" fill="#000000"/><rect x="4" y="11" width="2" height="1" fill="#ffffff"/><rect x="6" y="11" width="5" height="1" fill="#000000"/><rect x="11" y="11" width="2" height="1" fill="#ffffff"/><rect x="13" y="11" width="1" height="1" fill="#000000"/><rect x="1" y="12" width="1" height="1" fill="#808080"/><rect x="2" y="12" width="2" height="1" fill="#ffffff"/><rect x="4" y="12" width="3" height="1" fill="#000000"/><rect x="7" y="12" width="3" height="1" fill="#ffffff"/><rect x="10" y="12" width="1" height="1" fill="#000000"/><rect x="11" y="12" width="2" height="1" fill="#ffffff"/><rect x="13" y="12" width="1" height="1" fill="#000000"/><rect x="1" y="13" width="1" height="1" fill="#808080"/><rect x="2" y="13" width="11" height="1" fill="#ffffff"/><rect x="13" y="13" width="1" height="1" fill="#000000"/><rect x="1" y="14" width="1" height="1" fill="#808080"/><rect x="2" y="14" width="11" height="1" fill="#ffffff"/><rect x="13" y="14" width="1" height="1" fill="#000000"/><rect x="1" y="15" width="1" height="1" fill="#808080"/><rect x="2" y="15" width="11" height="1" fill="#ffffff"/><rect x="13" y="15" width="1" height="1" fill="#000000"/><rect x="1" y="16" width="13" height="1" fill="#000000"/></symbol></defs></svg>
</body></html>
